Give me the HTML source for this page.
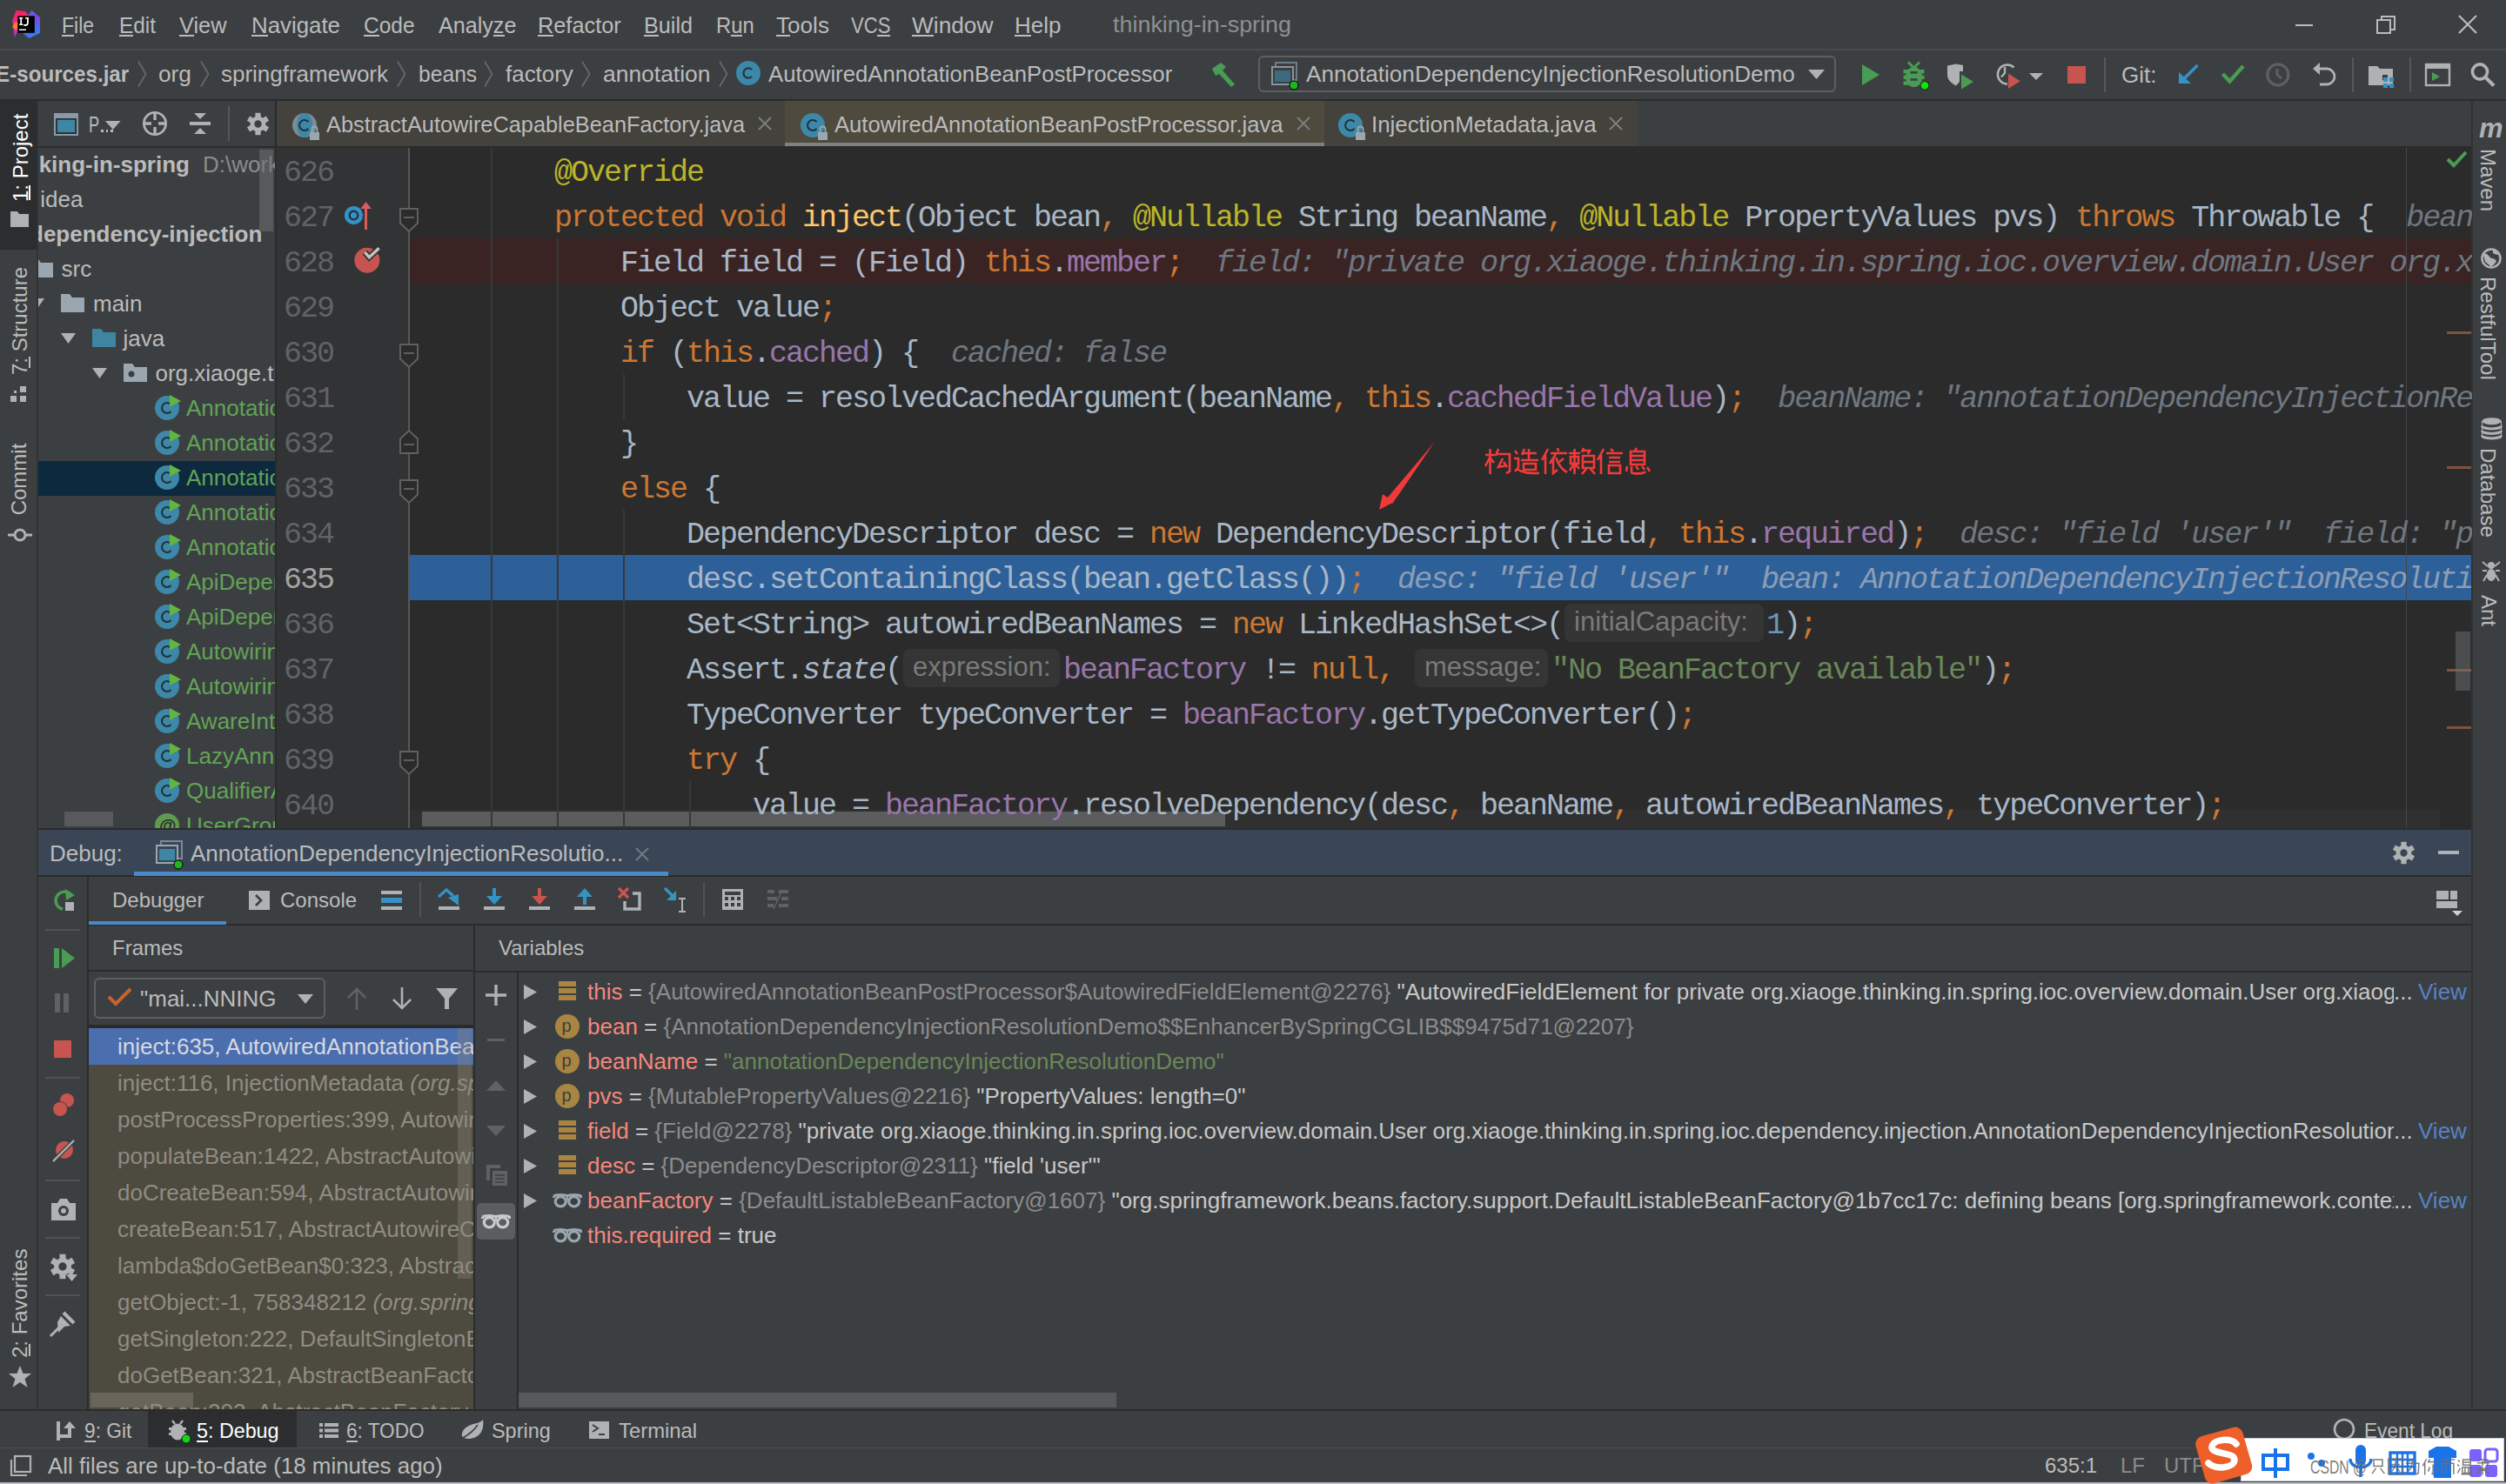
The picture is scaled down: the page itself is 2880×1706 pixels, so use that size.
<!DOCTYPE html>
<html><head><meta charset="utf-8"><title>IntelliJ</title>
<style>
html,body{margin:0;padding:0;width:2880px;height:1706px;overflow:hidden;background:#3C3F41}
body{position:relative;font-family:"Liberation Sans",sans-serif}
div{position:absolute;white-space:pre;box-sizing:border-box}
svg{position:absolute;overflow:visible}
</style></head><body>
<div style="left:0px;top:0px;width:2880px;height:1706px;background:#3C3F41;"></div>
<div style="left:0px;top:56px;width:2880px;height:2px;background:#4A4D4F;"></div>
<div style="left:0px;top:114px;width:2880px;height:2px;background:#2B2B2B;"></div>
<div style="left:0px;top:116px;width:42px;height:171px;background:#2B2D2F;"></div>
<div style="left:42px;top:116px;width:2px;height:1506px;background:#323232;"></div>
<div style="left:44px;top:168px;width:272px;height:2px;background:#2B2B2B;"></div>
<div style="left:316px;top:116px;width:2px;height:838px;background:#2B2B2B;"></div>
<div style="left:318px;top:116px;width:584px;height:52px;background:#43423C;"></div>
<div style="left:902px;top:116px;width:620px;height:52px;background:#4E4A3E;"></div>
<div style="left:902px;top:164px;width:620px;height:4px;background:#7B8185;"></div>
<div style="left:1522px;top:116px;width:360px;height:52px;background:#43423C;"></div>
<div style="left:318px;top:168px;width:2523px;height:2px;background:#2B2B2B;"></div>
<div style="left:318px;top:170px;width:153px;height:782px;background:#313335;"></div>
<div style="left:471px;top:170px;width:2370px;height:782px;background:#2B2B2B;"></div>
<div style="left:471px;top:274px;width:2370px;height:52px;background:#3A2323;"></div>
<div style="left:471px;top:638px;width:2370px;height:52px;background:#2D6099;"></div>
<div style="left:2840px;top:116px;width:2px;height:1506px;background:#323232;"></div>
<div style="left:44px;top:952px;width:2796px;height:2px;background:#2B2B2B;"></div>
<div style="left:44px;top:954px;width:2796px;height:52px;background:#3A4656;"></div>
<div style="left:44px;top:1006px;width:2796px;height:2px;background:#2B2B2B;"></div>
<div style="left:100px;top:1008px;width:2px;height:612px;background:#2B2B2B;"></div>
<div style="left:102px;top:1062px;width:2738px;height:2px;background:#2B2B2B;"></div>
<div style="left:544px;top:1064px;width:2px;height:556px;background:#2B2B2B;"></div>
<div style="left:102px;top:1115px;width:442px;height:2px;background:#2B2B2B;"></div>
<div style="left:546px;top:1116px;width:2294px;height:2px;background:#2B2B2B;"></div>
<div style="left:102px;top:1180px;width:442px;height:440px;background:#4D4A3F;"></div>
<div style="left:102px;top:1178px;width:442px;height:4px;background:#2B2B2B;"></div>
<div style="left:594px;top:1118px;width:2px;height:502px;background:#2B2B2B;"></div>
<div style="left:0px;top:1620px;width:2880px;height:2px;background:#2B2B2B;"></div>
<div style="left:170px;top:1622px;width:171px;height:42px;background:#2B2D2F;"></div>
<div style="left:0px;top:1664px;width:2880px;height:1px;background:#4A4A4C;"></div>
<div style="left:0px;top:1704px;width:2880px;height:2px;background:#B9BCC4;"></div>
<!--CONTENT-->
<svg style="position:absolute;left:0px;top:0px;" width="60" height="56" viewBox="0 0 60 56"><defs><linearGradient id="lgb" x1="0" y1="0" x2="0.3" y2="1"><stop offset="0" stop-color="#3B7BEA"/><stop offset="0.45" stop-color="#7B46E4"/><stop offset="1" stop-color="#2F7FF2"/></linearGradient><linearGradient id="lgp" x1="0" y1="0" x2="0" y2="1"><stop offset="0" stop-color="#FE2255"/><stop offset="1" stop-color="#B534D8"/></linearGradient></defs>
<polygon points="33,17 36.5,12 46,20 46,38 33.5,44 27,39 31,26" fill="url(#lgb)"/>
<polygon points="18.5,12 29,13 33,17.5 31,30 19,38 17,43 14,24.5" fill="url(#lgp)"/>
<polygon points="14,31 18,25 21,27 19,35" fill="#FC801D"/>
<rect x="20.3" y="18.3" width="19.5" height="19.5" fill="#000"/>
<rect x="22.2" y="20" width="4" height="1.6" fill="#fff"/><rect x="23.3" y="20" width="1.8" height="9" fill="#fff"/><rect x="22.2" y="27.4" width="4" height="1.6" fill="#fff"/>
<path d="M31.9 20 V26.5 C31.9 28.5 30.5 29 29 29 C28 29 27.5 28.6 27.2 28.2" fill="none" stroke="#fff" stroke-width="1.8"/><rect x="29" y="20" width="4" height="1.6" fill="#fff"/>
<rect x="22" y="33.5" width="8" height="1.5" fill="#fff"/></svg>
<div style="left:70.8px;top:3.00px;height:52px;line-height:52px;font-size:26px;color:#BBBBBB;font-family:'Liberation Sans',sans-serif;transform:scaleX(0.8833);transform-origin:0 0;">File</div>
<div style="left:71px;top:40px;width:14px;height:2px;background:#BBBBBB;"></div>
<div style="left:136.6px;top:3.00px;height:52px;line-height:52px;font-size:26px;color:#BBBBBB;font-family:'Liberation Sans',sans-serif;transform:scaleX(0.9363);transform-origin:0 0;">Edit</div>
<div style="left:137px;top:40px;width:16px;height:2px;background:#BBBBBB;"></div>
<div style="left:206.0px;top:3.00px;height:52px;line-height:52px;font-size:26px;color:#BBBBBB;font-family:'Liberation Sans',sans-serif;transform:scaleX(0.9750);transform-origin:0 0;">View</div>
<div style="left:206px;top:40px;width:17px;height:2px;background:#BBBBBB;"></div>
<div style="left:288.6px;top:3.00px;height:52px;line-height:52px;font-size:26px;color:#BBBBBB;font-family:'Liberation Sans',sans-serif;transform:scaleX(0.9932);transform-origin:0 0;">Navigate</div>
<div style="left:289px;top:40px;width:19px;height:2px;background:#BBBBBB;"></div>
<div style="left:418.4px;top:3.00px;height:52px;line-height:52px;font-size:26px;color:#BBBBBB;font-family:'Liberation Sans',sans-serif;transform:scaleX(0.9414);transform-origin:0 0;">Code</div>
<div style="left:418px;top:40px;width:18px;height:2px;background:#BBBBBB;"></div>
<div style="left:504.0px;top:3.00px;height:52px;line-height:52px;font-size:26px;color:#BBBBBB;font-family:'Liberation Sans',sans-serif;transform:scaleX(0.9665);transform-origin:0 0;">Analyze</div>
<div style="left:567px;top:40px;width:13px;height:2px;background:#BBBBBB;"></div>
<div style="left:618.3px;top:3.00px;height:52px;line-height:52px;font-size:26px;color:#BBBBBB;font-family:'Liberation Sans',sans-serif;transform:scaleX(0.9740);transform-origin:0 0;">Refactor</div>
<div style="left:618px;top:40px;width:18px;height:2px;background:#BBBBBB;"></div>
<div style="left:740.0px;top:3.00px;height:52px;line-height:52px;font-size:26px;color:#BBBBBB;font-family:'Liberation Sans',sans-serif;transform:scaleX(0.9697);transform-origin:0 0;">Build</div>
<div style="left:740px;top:40px;width:17px;height:2px;background:#BBBBBB;"></div>
<div style="left:823.0px;top:3.00px;height:52px;line-height:52px;font-size:26px;color:#BBBBBB;font-family:'Liberation Sans',sans-serif;transform:scaleX(0.9152);transform-origin:0 0;">Run</div>
<div style="left:840px;top:40px;width:13px;height:2px;background:#BBBBBB;"></div>
<div style="left:892.0px;top:3.00px;height:52px;line-height:52px;font-size:26px;color:#BBBBBB;font-family:'Liberation Sans',sans-serif;transform:scaleX(1.0041);transform-origin:0 0;">Tools</div>
<div style="left:892px;top:40px;width:16px;height:2px;background:#BBBBBB;"></div>
<div style="left:977.6px;top:3.00px;height:52px;line-height:52px;font-size:26px;color:#BBBBBB;font-family:'Liberation Sans',sans-serif;transform:scaleX(0.8486);transform-origin:0 0;">VCS</div>
<div style="left:1008px;top:40px;width:15px;height:2px;background:#BBBBBB;"></div>
<div style="left:1048.0px;top:3.00px;height:52px;line-height:52px;font-size:26px;color:#BBBBBB;font-family:'Liberation Sans',sans-serif;transform:scaleX(1.0102);transform-origin:0 0;">Window</div>
<div style="left:1048px;top:40px;width:25px;height:2px;background:#BBBBBB;"></div>
<div style="left:1166.0px;top:3.00px;height:52px;line-height:52px;font-size:26px;color:#BBBBBB;font-family:'Liberation Sans',sans-serif;transform:scaleX(1.0000);transform-origin:0 0;">Help</div>
<div style="left:1166px;top:40px;width:19px;height:2px;background:#BBBBBB;"></div>
<div style="left:1279.0px;top:2.00px;height:52px;line-height:52px;font-size:26px;color:#8E9092;font-family:'Liberation Sans',sans-serif;transform:scaleX(1.0354);transform-origin:0 0;">thinking-in-spring</div>
<div style="left:2638px;top:28px;width:20px;height:2px;background:#BBBBBB;"></div>
<svg style="position:absolute;left:2730px;top:16px;" width="26" height="26" viewBox="0 0 26 26"><rect x="2" y="7" width="15" height="15" fill="none" stroke="#BBBBBB" stroke-width="2"/><path d="M7 7 V3 H22 V18 H17" fill="none" stroke="#BBBBBB" stroke-width="2"/></svg>
<svg style="position:absolute;left:2824px;top:16px;" width="24" height="24" viewBox="0 0 24 24"><path d="M2 2 L22 22 M22 2 L2 22" stroke="#BBBBBB" stroke-width="2.2"/></svg>
<div style="left:182.4px;top:59.00px;height:52px;line-height:52px;font-size:26px;color:#BBBBBB;font-family:'Liberation Sans',sans-serif;transform:scaleX(1.0107);transform-origin:0 0;">org</div>
<div style="left:254.2px;top:59.00px;height:52px;line-height:52px;font-size:26px;color:#BBBBBB;font-family:'Liberation Sans',sans-serif;transform:scaleX(0.9990);transform-origin:0 0;">springframework</div>
<div style="left:480.7px;top:59.00px;height:52px;line-height:52px;font-size:26px;color:#BBBBBB;font-family:'Liberation Sans',sans-serif;transform:scaleX(0.9484);transform-origin:0 0;">beans</div>
<div style="left:580.7px;top:59.00px;height:52px;line-height:52px;font-size:26px;color:#BBBBBB;font-family:'Liberation Sans',sans-serif;transform:scaleX(0.9974);transform-origin:0 0;">factory</div>
<div style="left:692.5px;top:59.00px;height:52px;line-height:52px;font-size:26px;color:#BBBBBB;font-family:'Liberation Sans',sans-serif;transform:scaleX(1.0165);transform-origin:0 0;">annotation</div>
<div style="left:882.8px;top:59.00px;height:52px;line-height:52px;font-size:26px;color:#BBBBBB;font-family:'Liberation Sans',sans-serif;transform:scaleX(0.9882);transform-origin:0 0;">AutowiredAnnotationBeanPostProcessor</div>
<div style="left:-4.8174999999999955px;top:59.00px;height:52px;line-height:52px;font-size:26px;color:#BBBBBB;font-family:'Liberation Sans',sans-serif;font-weight:700;transform:scaleX(0.93);transform-origin:0 0">E-sources.jar</div>
<svg style="position:absolute;left:158px;top:70px;" width="11" height="31" viewBox="0 0 11 31"><path d="M1 0.5 L9.5 15 L1 29.5" fill="none" stroke="#65686A" stroke-width="1.8"/></svg>
<svg style="position:absolute;left:230px;top:70px;" width="11" height="31" viewBox="0 0 11 31"><path d="M1 0.5 L9.5 15 L1 29.5" fill="none" stroke="#65686A" stroke-width="1.8"/></svg>
<svg style="position:absolute;left:456px;top:70px;" width="11" height="31" viewBox="0 0 11 31"><path d="M1 0.5 L9.5 15 L1 29.5" fill="none" stroke="#65686A" stroke-width="1.8"/></svg>
<svg style="position:absolute;left:556px;top:70px;" width="11" height="31" viewBox="0 0 11 31"><path d="M1 0.5 L9.5 15 L1 29.5" fill="none" stroke="#65686A" stroke-width="1.8"/></svg>
<svg style="position:absolute;left:668px;top:70px;" width="11" height="31" viewBox="0 0 11 31"><path d="M1 0.5 L9.5 15 L1 29.5" fill="none" stroke="#65686A" stroke-width="1.8"/></svg>
<svg style="position:absolute;left:826px;top:70px;" width="11" height="31" viewBox="0 0 11 31"><path d="M1 0.5 L9.5 15 L1 29.5" fill="none" stroke="#65686A" stroke-width="1.8"/></svg>
<svg style="position:absolute;left:846px;top:70px;" width="28" height="28" viewBox="0 0 28 28"><circle cx="14" cy="14" r="14" fill="#3D87A8"/><path d="M18 10 A5.6 5.6 0 1 0 18 18" fill="none" stroke="#26343C" stroke-width="2.2"/></svg>
<svg style="position:absolute;left:1390px;top:70px;" width="34" height="32" viewBox="0 0 34 32"><path d="M3 9 L13 2 L19 7 L15 11 L29 27 L25 30 L11 15 L7 17 Z" fill="#499C54"/></svg>
<div style="left:1446px;top:64px;width:664px;height:42px;border:2px solid #5E6060;border-radius:6px;box-sizing:border-box"></div>
<svg style="position:absolute;left:1460px;top:70px;" width="36" height="34" viewBox="0 0 36 34"><rect x="6" y="2" width="24" height="20" fill="none" stroke="#6E7C86" stroke-width="2"/><rect x="2" y="7" width="24" height="20" fill="#3C3F41" stroke="#8A9499" stroke-width="2"/><rect x="5" y="11" width="18" height="13" fill="#3E6A7F"/><circle cx="27" cy="28" r="5" fill="#1DB71D" stroke="#000" stroke-width="1"/></svg>
<div style="left:1501.0px;top:59.00px;height:52px;line-height:52px;font-size:26px;color:#BBBBBB;font-family:'Liberation Sans',sans-serif;transform:scaleX(1.0045);transform-origin:0 0;">AnnotationDependencyInjectionResolutionDemo</div>
<svg style="position:absolute;left:2078px;top:80px;" width="20" height="12" viewBox="0 0 20 12"><path d="M0 0 H19 L9.5 11 Z" fill="#AFB1B3"/></svg>
<svg style="position:absolute;left:2138px;top:72px;" width="24" height="28" viewBox="0 0 24 28"><path d="M2 2 L22 14 L2 26 Z" fill="#499C54"/></svg>
<svg style="position:absolute;left:2186px;top:70px;" width="34" height="36" viewBox="0 0 34 36"><path d="M7 1.5 L13.5 8 L20 1.5" fill="none" stroke="#499C54" stroke-width="3"/><ellipse cx="13.5" cy="18.5" rx="9.5" ry="11.5" fill="#499C54"/><g fill="#499C54"><rect x="1.5" y="10" width="24" height="4.4"/><rect x="1.5" y="16.6" width="24" height="4.4"/><rect x="1.5" y="23.4" width="24" height="4.4"/></g><rect x="9.5" y="12" width="8" height="2.6" fill="#3C3F41"/><rect x="9.5" y="20.2" width="8" height="2.6" fill="#3C3F41"/><circle cx="26" cy="28.3" r="5" fill="#11E011" stroke="#1E2A1E" stroke-width="1.2"/></svg>
<svg style="position:absolute;left:2236px;top:72px;" width="36" height="34" viewBox="0 0 36 34"><path d="M2 3.5 L12 1.5 L20 3 V10 H16 V22 L12 26.5 C7 24 2 20 2 14 Z" fill="#AFB1B3"/><path d="M18 13.5 L32 22 L18 30.5 Z" fill="#499C54"/></svg>
<svg style="position:absolute;left:2290px;top:70px;" width="62" height="36" viewBox="0 0 62 36"><path d="M17 26.5 A11 11 0 1 1 24.5 7.5" fill="none" stroke="#AFB1B3" stroke-width="2.6"/><path d="M14 7 V14 L10 18.5" stroke="#AFB1B3" stroke-width="2.4" fill="none"/><path d="M18 14.5 L31.7 23.2 L18 32 Z" fill="#C75450"/><path d="M42 14 H58 L50 22 Z" fill="#AFB1B3"/></svg>
<div style="left:2376px;top:76px;width:21px;height:20px;background:#C75450;"></div>
<div style="left:2418px;top:66px;width:2px;height:40px;background:#555759;"></div>
<div style="left:2438px;top:60.00px;height:52px;line-height:52px;font-size:26px;color:#BBBBBB;font-family:'Liberation Sans',sans-serif;">Git:</div>
<svg style="position:absolute;left:2500px;top:70px;" width="30" height="32" viewBox="0 0 30 32"><path d="M25.5 5 L10 20.5" stroke="#3592C4" stroke-width="3.6"/><path d="M4 13 V26 H18 Z" fill="#3592C4"/></svg>
<svg style="position:absolute;left:2552px;top:72px;" width="32" height="28" viewBox="0 0 32 28"><path d="M2.5 13 L10.5 21.5 L26 4" fill="none" stroke="#499C54" stroke-width="4.4"/></svg>
<svg style="position:absolute;left:2602px;top:70px;" width="32" height="32" viewBox="0 0 32 32"><circle cx="15.9" cy="15.9" r="12" fill="none" stroke="#5E6060" stroke-width="3.2"/><path d="M15 9 V16 L20 20" stroke="#5E6060" stroke-width="3" fill="none"/></svg>
<svg style="position:absolute;left:2656px;top:70px;" width="32" height="32" viewBox="0 0 32 32"><path d="M9 9 H18 A9 9 0 1 1 18 27 H10" fill="none" stroke="#AFB1B3" stroke-width="2.8"/><path d="M2 9 L10 2 V16 Z" fill="#AFB1B3"/></svg>
<div style="left:2703px;top:66px;width:2px;height:40px;background:#555759;"></div>
<svg style="position:absolute;left:2720px;top:70px;" width="34" height="34" viewBox="0 0 34 34"><path d="M2 6 H12 L15 9 H30 V28 H2 Z" fill="#AFB1B3"/><rect x="18" y="16" width="6" height="6" fill="#3C3F41"/><rect x="19" y="19" width="5" height="5" fill="#3592C4"/><rect x="26" y="19" width="5" height="5" fill="#3592C4"/><rect x="26" y="26" width="5" height="5" fill="#3592C4"/><rect x="19" y="26" width="5" height="5" fill="#3592C4"/></svg>
<div style="left:2769px;top:66px;width:2px;height:40px;background:#555759;"></div>
<svg style="position:absolute;left:2786px;top:70px;" width="32" height="32" viewBox="0 0 32 32"><rect x="2" y="4" width="27" height="24" fill="none" stroke="#AFB1B3" stroke-width="2.4"/><rect x="2" y="4" width="27" height="5" fill="#AFB1B3"/><path d="M9 13 L18 18 L9 23 Z" fill="#499C54"/></svg>
<svg style="position:absolute;left:2838px;top:70px;" width="32" height="32" viewBox="0 0 32 32"><circle cx="12" cy="12.5" r="8.6" fill="none" stroke="#AFB1B3" stroke-width="3.6"/><path d="M18.5 19 L28 28.5" stroke="#AFB1B3" stroke-width="4"/></svg>
<div style="left:-25.0px;top:159.0px;width:98px;height:48px;line-height:48px;font-size:24px;color:#FFFFFF;font-family:'Liberation Sans',sans-serif;text-align:center;transform:rotate(-90deg)">1: Project</div>
<div style="left:33px;top:213px;width:2px;height:17px;background:#FFFFFF;"></div>
<svg style="position:absolute;left:11px;top:242px;" width="24" height="20" viewBox="0 0 24 20"><path d="M1 1 H9 L11 4 H22 V19 H1 Z" fill="#AFB1B3"/></svg>
<div style="left:-37.0px;top:347.0px;width:120px;height:48px;line-height:48px;font-size:24px;color:#BBBBBB;font-family:'Liberation Sans',sans-serif;text-align:center;transform:rotate(-90deg)">7: Structure</div>
<div style="left:33px;top:410px;width:2px;height:13px;background:#BBBBBB;"></div>
<svg style="position:absolute;left:10px;top:443px;" width="24" height="20" viewBox="0 0 24 20"><rect x="2" y="12" width="7" height="7" fill="#AFB1B3"/><rect x="13" y="12" width="7" height="7" fill="#AFB1B3"/><rect x="13" y="1" width="7" height="7" fill="#AFB1B3"/><rect x="6" y="6" width="3" height="3" fill="#AFB1B3"/></svg>
<div style="left:-20.0px;top:527.0px;width:84px;height:48px;line-height:48px;font-size:24px;color:#BBBBBB;font-family:'Liberation Sans',sans-serif;text-align:center;transform:rotate(-90deg)">Commit</div>
<svg style="position:absolute;left:9px;top:603px;" width="28" height="24" viewBox="0 0 28 24"><circle cx="14" cy="12" r="6" fill="none" stroke="#AFB1B3" stroke-width="3"/><path d="M0 12 H8 M20 12 H28" stroke="#AFB1B3" stroke-width="3"/></svg>
<div style="left:-36.0px;top:1478.0px;width:118px;height:48px;line-height:48px;font-size:24px;color:#BBBBBB;font-family:'Liberation Sans',sans-serif;text-align:center;transform:rotate(-90deg)">2: Favorites</div>
<div style="left:33px;top:1545px;width:2px;height:14px;background:#BBBBBB;"></div>
<svg style="position:absolute;left:9px;top:1569px;" width="28" height="28" viewBox="0 0 28 28"><path d="M14 1 L17.5 10 H27 L19.5 16 L22.5 26 L14 20 L5.5 26 L8.5 16 L1 10 H10.5 Z" fill="#AFB1B3"/></svg>
<div style="left:2849px;top:117.00px;height:62px;line-height:62px;font-size:31px;color:#AFB1B3;font-family:'Liberation Sans',sans-serif;font-weight:700;font-style:italic;letter-spacing:-1px">m</div>
<div style="left:2824.0px;top:182.0px;width:70px;height:48px;line-height:48px;font-size:24px;color:#BBBBBB;font-family:'Liberation Sans',sans-serif;text-align:center;transform:rotate(90deg)">Maven</div>
<svg style="position:absolute;left:2850px;top:284px;" width="26" height="26" viewBox="0 0 26 26"><circle cx="13" cy="13" r="10.5" fill="none" stroke="#AFB1B3" stroke-width="2.6"/><path d="M4 8 C8 6 10 10 12 12 C14 14 16 12 19 16 C17 20 14 22 12 23 C11 20 8 19 6 17 Z M15 3 C18 4 20 6 21 9 C19 9 17 8 15 7 Z" fill="#AFB1B3"/></svg>
<div style="left:2800.0px;top:353.0px;width:118px;height:48px;line-height:48px;font-size:24px;color:#BBBBBB;font-family:'Liberation Sans',sans-serif;text-align:center;transform:rotate(90deg)">RestfulTool</div>
<svg style="position:absolute;left:2852px;top:480px;" width="23" height="25" viewBox="0 0 23 25"><ellipse cx="11.5" cy="4.2" rx="11" ry="4" fill="#AFB1B3"/><path d="M0.5 9.5 C0.5 14 22.5 14 22.5 9.5 M0.5 15 C0.5 19.5 22.5 19.5 22.5 15 M0.5 20.5 C0.5 25 22.5 25 22.5 20.5" stroke="#AFB1B3" stroke-width="3" fill="none"/><path d="M0.5 4 V21 M22.5 4 V21" stroke="#AFB1B3" stroke-width="1"/></svg>
<div style="left:2812.0px;top:538.0px;width:94px;height:48px;line-height:48px;font-size:24px;color:#BBBBBB;font-family:'Liberation Sans',sans-serif;text-align:center;transform:rotate(90deg)">Database</div>
<svg style="position:absolute;left:2852px;top:645px;" width="22" height="24" viewBox="0 0 22 24"><circle cx="11" cy="5" r="4" fill="#AFB1B3"/><ellipse cx="11" cy="16" rx="5.2" ry="7" fill="#AFB1B3"/><path d="M1 1 L7 6 M21 1 L15 6 M1 11 H6 M21 11 H16 M2 23 L6 16 M20 23 L16 16" stroke="#AFB1B3" stroke-width="2"/></svg>
<div style="left:2840.5px;top:677.5px;width:37px;height:48px;line-height:48px;font-size:24px;color:#BBBBBB;font-family:'Liberation Sans',sans-serif;text-align:center;transform:rotate(90deg)">Ant</div>
<svg style="position:absolute;left:62px;top:130px;" width="28" height="26" viewBox="0 0 28 26"><rect x="0" y="0" width="28" height="26" fill="#8A99A6"/><rect x="2" y="6" width="24" height="18" fill="#2B2D2F"/><rect x="3.8" y="7.7" width="20.4" height="14.4" fill="#3E86A6"/></svg>
<div style="left:101.8px;top:118.00px;height:50px;line-height:50px;font-size:25px;color:#BBBBBB;font-family:'Liberation Sans',sans-serif;transform:scaleX(0.7284);transform-origin:0 0;">P</div>
<div style="left:116px;top:149px;width:2.5px;height:2.5px;background:#BBBBBB;"></div>
<div style="left:121.5px;top:149px;width:2.5px;height:2.5px;background:#BBBBBB;"></div>
<div style="left:127px;top:149px;width:2.5px;height:2.5px;background:#BBBBBB;"></div>
<svg style="position:absolute;left:121px;top:139px;" width="18" height="11" viewBox="0 0 18 11"><path d="M0 0 H17.6 L8.8 10 Z" fill="#AFB1B3"/></svg>
<svg style="position:absolute;left:163px;top:127px;" width="30" height="30" viewBox="0 0 30 30"><circle cx="15" cy="15" r="12.6" fill="none" stroke="#AFB1B3" stroke-width="2.8"/><path d="M15 3 V11 M15 19 V27 M3 15 H11 M19 15 H27" stroke="#AFB1B3" stroke-width="3.4"/></svg>
<svg style="position:absolute;left:217px;top:128px;" width="26" height="28" viewBox="0 0 26 28"><rect x="1" y="12" width="24" height="4" fill="#AFB1B3"/><path d="M6 2 H20 L13 9 Z M6 26 H20 L13 19 Z" fill="#AFB1B3"/></svg>
<div style="left:262px;top:122px;width:2px;height:40px;background:#555759;"></div>
<svg style="position:absolute;left:284px;top:130px;" width="25" height="25" viewBox="0 0 25 25"><g transform="scale(1.0416666666666667) translate(12,12)" fill="#AFB1B3"><circle r="8.6"/><rect x="-3" y="-12.2" width="6" height="6" transform="rotate(0)"/><rect x="-3" y="-12.2" width="6" height="6" transform="rotate(60)"/><rect x="-3" y="-12.2" width="6" height="6" transform="rotate(120)"/><rect x="-3" y="-12.2" width="6" height="6" transform="rotate(180)"/><rect x="-3" y="-12.2" width="6" height="6" transform="rotate(240)"/><rect x="-3" y="-12.2" width="6" height="6" transform="rotate(300)"/><circle r="4" fill="#3C3F41"/></g></svg>
<div style="left:44px;top:170px;width:272px;height:782px;overflow:hidden">
<div style="left:0;top:360px;width:272px;height:40px;background:#0D293E"></div>
<div style="left:-47px;top:-7.0px;height:52px;line-height:52px;font-size:26px;color:#BBBBBB;font-family:'Liberation Sans',sans-serif;font-weight:700">thinking-in-spring</div>
<div style="left:189px;top:-7.0px;height:52px;line-height:52px;font-size:26px;color:#8C8C8C;font-family:'Liberation Sans',sans-serif;font-weight:400">D:\work</div>
<div style="left:-5px;top:33.0px;height:52px;line-height:52px;font-size:26px;color:#BBBBBB;font-family:'Liberation Sans',sans-serif;font-weight:400">.idea</div>
<div style="left:-10px;top:73.0px;height:52px;line-height:52px;font-size:26px;color:#BBBBBB;font-family:'Liberation Sans',sans-serif;font-weight:700">dependency-injection</div>
<svg style="position:absolute;left:-11px;top:127px" width="29" height="23" viewBox="0 0 29 23"><path d="M1 1 H11 L14 5 H28 V22 H1 Z" fill="#9AA7B0"/></svg>
<div style="left:26.599999999999994px;top:113.0px;height:52px;line-height:52px;font-size:26px;color:#BBBBBB;font-family:'Liberation Sans',sans-serif;font-weight:400">src</div>
<svg style="position:absolute;left:-10px;top:173px" width="18" height="13" viewBox="0 0 18 13"><path d="M0 0 H17 L8.5 12 Z" fill="#AFB1B3"/></svg>
<svg style="position:absolute;left:25px;top:167px" width="29" height="23" viewBox="0 0 29 23"><path d="M1 1 H11 L14 5 H28 V22 H1 Z" fill="#9AA7B0"/></svg>
<div style="left:63px;top:153.0px;height:52px;line-height:52px;font-size:26px;color:#BBBBBB;font-family:'Liberation Sans',sans-serif;font-weight:400">main</div>
<svg style="position:absolute;left:26px;top:213px" width="18" height="13" viewBox="0 0 18 13"><path d="M0 0 H17 L8.5 12 Z" fill="#AFB1B3"/></svg>
<svg style="position:absolute;left:61px;top:207px" width="29" height="23" viewBox="0 0 29 23"><path d="M1 1 H11 L14 5 H28 V22 H1 Z" fill="#3E86A0"/></svg>
<div style="left:97.5px;top:193.0px;height:52px;line-height:52px;font-size:26px;color:#BBBBBB;font-family:'Liberation Sans',sans-serif;font-weight:400">java</div>
<svg style="position:absolute;left:62px;top:253px" width="18" height="13" viewBox="0 0 18 13"><path d="M0 0 H17 L8.5 12 Z" fill="#AFB1B3"/></svg>
<svg style="position:absolute;left:97px;top:247px" width="29" height="23" viewBox="0 0 29 23"><path d="M1 1 H11 L14 5 H28 V22 H1 Z" fill="#9AA7B0"/><circle cx="10" cy="13" r="3.5" fill="#3C3F41"/></svg>
<div style="left:134.5px;top:233.0px;height:52px;line-height:52px;font-size:26px;color:#BBBBBB;font-family:'Liberation Sans',sans-serif;font-weight:400">org.xiaoge.thinking</div>
<svg style="position:absolute;left:134px;top:285px" width="31" height="30" viewBox="0 0 31 30"><circle cx="14" cy="14" r="14" fill="#3D87A8"/><path d="M18.5 10 A6 6 0 1 0 18.5 18" fill="none" stroke="#22303A" stroke-width="2.1"/><path d="M17 -1 L30 6 L17 13 Z" fill="#62B543"/></svg>
<div style="left:170px;top:273.0px;height:52px;line-height:52px;font-size:26px;color:#62A356;font-family:'Liberation Sans',sans-serif;font-weight:400">AnnotationDependencyConstructorInjectionDemo</div>
<svg style="position:absolute;left:134px;top:325px" width="31" height="30" viewBox="0 0 31 30"><circle cx="14" cy="14" r="14" fill="#3D87A8"/><path d="M18.5 10 A6 6 0 1 0 18.5 18" fill="none" stroke="#22303A" stroke-width="2.1"/><path d="M17 -1 L30 6 L17 13 Z" fill="#62B543"/></svg>
<div style="left:170px;top:313.0px;height:52px;line-height:52px;font-size:26px;color:#62A356;font-family:'Liberation Sans',sans-serif;font-weight:400">AnnotationDependencyFieldInjectionDemo</div>
<svg style="position:absolute;left:134px;top:365px" width="31" height="30" viewBox="0 0 31 30"><circle cx="14" cy="14" r="14" fill="#3D87A8"/><path d="M18.5 10 A6 6 0 1 0 18.5 18" fill="none" stroke="#22303A" stroke-width="2.1"/><path d="M17 -1 L30 6 L17 13 Z" fill="#62B543"/></svg>
<div style="left:170px;top:353.0px;height:52px;line-height:52px;font-size:26px;color:#62A356;font-family:'Liberation Sans',sans-serif;font-weight:400">AnnotationDependencyInjectionResolutionDemo</div>
<svg style="position:absolute;left:134px;top:405px" width="31" height="30" viewBox="0 0 31 30"><circle cx="14" cy="14" r="14" fill="#3D87A8"/><path d="M18.5 10 A6 6 0 1 0 18.5 18" fill="none" stroke="#22303A" stroke-width="2.1"/><path d="M17 -1 L30 6 L17 13 Z" fill="#62B543"/></svg>
<div style="left:170px;top:393.0px;height:52px;line-height:52px;font-size:26px;color:#62A356;font-family:'Liberation Sans',sans-serif;font-weight:400">AnnotationDependencyMethodInjectionDemo</div>
<svg style="position:absolute;left:134px;top:445px" width="31" height="30" viewBox="0 0 31 30"><circle cx="14" cy="14" r="14" fill="#3D87A8"/><path d="M18.5 10 A6 6 0 1 0 18.5 18" fill="none" stroke="#22303A" stroke-width="2.1"/><path d="M17 -1 L30 6 L17 13 Z" fill="#62B543"/></svg>
<div style="left:170px;top:433.0px;height:52px;line-height:52px;font-size:26px;color:#62A356;font-family:'Liberation Sans',sans-serif;font-weight:400">AnnotationDependencySetterInjectionDemo</div>
<svg style="position:absolute;left:134px;top:485px" width="31" height="30" viewBox="0 0 31 30"><circle cx="14" cy="14" r="14" fill="#3D87A8"/><path d="M18.5 10 A6 6 0 1 0 18.5 18" fill="none" stroke="#22303A" stroke-width="2.1"/><path d="M17 -1 L30 6 L17 13 Z" fill="#62B543"/></svg>
<div style="left:170px;top:473.0px;height:52px;line-height:52px;font-size:26px;color:#62A356;font-family:'Liberation Sans',sans-serif;font-weight:400">ApiDependencyConstructorInjectionDemo</div>
<svg style="position:absolute;left:134px;top:525px" width="31" height="30" viewBox="0 0 31 30"><circle cx="14" cy="14" r="14" fill="#3D87A8"/><path d="M18.5 10 A6 6 0 1 0 18.5 18" fill="none" stroke="#22303A" stroke-width="2.1"/><path d="M17 -1 L30 6 L17 13 Z" fill="#62B543"/></svg>
<div style="left:170px;top:513.0px;height:52px;line-height:52px;font-size:26px;color:#62A356;font-family:'Liberation Sans',sans-serif;font-weight:400">ApiDependencySetterInjectionDemo</div>
<svg style="position:absolute;left:134px;top:565px" width="31" height="30" viewBox="0 0 31 30"><circle cx="14" cy="14" r="14" fill="#3D87A8"/><path d="M18.5 10 A6 6 0 1 0 18.5 18" fill="none" stroke="#22303A" stroke-width="2.1"/><path d="M17 -1 L30 6 L17 13 Z" fill="#62B543"/></svg>
<div style="left:170px;top:553.0px;height:52px;line-height:52px;font-size:26px;color:#62A356;font-family:'Liberation Sans',sans-serif;font-weight:400">AutowiringByNameDependencySetterInjectionDemo</div>
<svg style="position:absolute;left:134px;top:605px" width="31" height="30" viewBox="0 0 31 30"><circle cx="14" cy="14" r="14" fill="#3D87A8"/><path d="M18.5 10 A6 6 0 1 0 18.5 18" fill="none" stroke="#22303A" stroke-width="2.1"/><path d="M17 -1 L30 6 L17 13 Z" fill="#62B543"/></svg>
<div style="left:170px;top:593.0px;height:52px;line-height:52px;font-size:26px;color:#62A356;font-family:'Liberation Sans',sans-serif;font-weight:400">AutowiringConstructorDependencyConstructorInjectionDemo</div>
<svg style="position:absolute;left:134px;top:645px" width="31" height="30" viewBox="0 0 31 30"><circle cx="14" cy="14" r="14" fill="#3D87A8"/><path d="M18.5 10 A6 6 0 1 0 18.5 18" fill="none" stroke="#22303A" stroke-width="2.1"/><path d="M17 -1 L30 6 L17 13 Z" fill="#62B543"/></svg>
<div style="left:170px;top:633.0px;height:52px;line-height:52px;font-size:26px;color:#62A356;font-family:'Liberation Sans',sans-serif;font-weight:400">AwareInterfaceDependencyInjectionDemo</div>
<svg style="position:absolute;left:134px;top:685px" width="31" height="30" viewBox="0 0 31 30"><circle cx="14" cy="14" r="14" fill="#3D87A8"/><path d="M18.5 10 A6 6 0 1 0 18.5 18" fill="none" stroke="#22303A" stroke-width="2.1"/><path d="M17 -1 L30 6 L17 13 Z" fill="#62B543"/></svg>
<div style="left:170px;top:673.0px;height:52px;line-height:52px;font-size:26px;color:#62A356;font-family:'Liberation Sans',sans-serif;font-weight:400">LazyAnnotationDependencyInjectionDemo</div>
<svg style="position:absolute;left:134px;top:725px" width="31" height="30" viewBox="0 0 31 30"><circle cx="14" cy="14" r="14" fill="#3D87A8"/><path d="M18.5 10 A6 6 0 1 0 18.5 18" fill="none" stroke="#22303A" stroke-width="2.1"/><path d="M17 -1 L30 6 L17 13 Z" fill="#62B543"/></svg>
<div style="left:170px;top:713.0px;height:52px;line-height:52px;font-size:26px;color:#62A356;font-family:'Liberation Sans',sans-serif;font-weight:400">QualifierAnnotationDependencyInjectionDemo</div>
<svg style="position:absolute;left:134px;top:765px" width="30" height="30" viewBox="0 0 30 30"><circle cx="14" cy="14" r="14" fill="#5E9A4F"/><text x="5" y="21" font-family="Liberation Sans" font-weight="700" font-size="20" fill="#2B2B2B">@</text></svg>
<div style="left:170px;top:753.0px;height:52px;line-height:52px;font-size:26px;color:#62A356;font-family:'Liberation Sans',sans-serif;font-weight:400">UserGroup</div>
<div style="left:254px;top:2px;width:16px;height:94px;background:rgba(110,112,114,0.55)"></div>
<div style="left:30px;top:763px;width:56px;height:17px;background:rgba(110,112,114,0.55)"></div>
</div>
<svg style="position:absolute;left:336px;top:130px;" width="32" height="32" viewBox="0 0 32 32"><circle cx="14" cy="14" r="14" fill="#7E8B93"/><ellipse cx="14" cy="14" rx="9" ry="14" fill="#3D87A8"/><path d="M18.5 10 A6 6 0 1 0 18.5 18" fill="none" stroke="#22303A" stroke-width="2"/><rect x="20" y="22" width="11" height="9" fill="#9AA7B0"/><path d="M22.5 22 V18.5 A3 3 0 0 1 28.5 18.5 V22" fill="none" stroke="#9AA7B0" stroke-width="1.8"/></svg>
<div style="left:375.0px;top:117.00px;height:52px;line-height:52px;font-size:26px;color:#BBBBBB;font-family:'Liberation Sans',sans-serif;transform:scaleX(0.9742);transform-origin:0 0;">AbstractAutowireCapableBeanFactory.java</div>
<svg style="position:absolute;left:871px;top:134px;" width="16" height="16" viewBox="0 0 16 16"><path d="M1 1 L15 15 M15 1 L1 15" stroke="#7C7E80" stroke-width="2"/></svg>
<svg style="position:absolute;left:920px;top:130px;" width="32" height="32" viewBox="0 0 32 32"><circle cx="14" cy="14" r="14" fill="#3D87A8"/><path d="M18.5 10 A6 6 0 1 0 18.5 18" fill="none" stroke="#22303A" stroke-width="2"/><rect x="20" y="22" width="11" height="9" fill="#9AA7B0"/><path d="M22.5 22 V18.5 A3 3 0 0 1 28.5 18.5 V22" fill="none" stroke="#9AA7B0" stroke-width="1.8"/></svg>
<div style="left:959.0px;top:117.00px;height:52px;line-height:52px;font-size:26px;color:#BBBBBB;font-family:'Liberation Sans',sans-serif;transform:scaleX(0.9854);transform-origin:0 0;">AutowiredAnnotationBeanPostProcessor.java</div>
<svg style="position:absolute;left:1490px;top:134px;" width="16" height="16" viewBox="0 0 16 16"><path d="M1 1 L15 15 M15 1 L1 15" stroke="#7C7E80" stroke-width="2"/></svg>
<svg style="position:absolute;left:1538px;top:130px;" width="32" height="32" viewBox="0 0 32 32"><circle cx="14" cy="14" r="14" fill="#3D87A8"/><path d="M18.5 10 A6 6 0 1 0 18.5 18" fill="none" stroke="#22303A" stroke-width="2"/><rect x="20" y="22" width="11" height="9" fill="#9AA7B0"/><path d="M22.5 22 V18.5 A3 3 0 0 1 28.5 18.5 V22" fill="none" stroke="#9AA7B0" stroke-width="1.8"/></svg>
<div style="left:1576.0px;top:117.00px;height:52px;line-height:52px;font-size:26px;color:#BBBBBB;font-family:'Liberation Sans',sans-serif;transform:scaleX(0.9937);transform-origin:0 0;">InjectionMetadata.java</div>
<svg style="position:absolute;left:1849px;top:134px;" width="16" height="16" viewBox="0 0 16 16"><path d="M1 1 L15 15 M15 1 L1 15" stroke="#7C7E80" stroke-width="2"/></svg>
<div style="left:0;top:0;width:2880px;height:1706px;clip-path:inset(170px 39px 754px 318px)">
<div style="left:471px;top:931px;width:2333px;height:21px;background:rgba(255,255,255,0.028);"></div>
<div style="left:485px;top:933px;width:923px;height:17px;background:#5A5C5E;"></div>
<div style="left:564px;top:170px;width:2px;height:782px;background:#373839;"></div>
<div style="left:640px;top:274px;width:2px;height:678px;background:#373839;"></div>
<div style="left:716px;top:430px;width:2px;height:52px;background:#373839;"></div>
<div style="left:716px;top:586px;width:2px;height:366px;background:#373839;"></div>
<div style="left:792px;top:898px;width:2px;height:54px;background:#373839;"></div>
<div style="left:2765px;top:170px;width:1px;height:782px;background:#444648;"></div>
<div style="left:469px;top:170px;width:2px;height:782px;background:#555759;"></div>
<div style="left:326px;top:173.22px;height:52px;line-height:52px;font-size:35px;font-family:'Liberation Mono',monospace;letter-spacing:-2.0034px;"><span style="color:#606366;">626</span></div>
<div style="left:326px;top:225.22px;height:52px;line-height:52px;font-size:35px;font-family:'Liberation Mono',monospace;letter-spacing:-2.0034px;"><span style="color:#606366;">627</span></div>
<div style="left:326px;top:277.22px;height:52px;line-height:52px;font-size:35px;font-family:'Liberation Mono',monospace;letter-spacing:-2.0034px;"><span style="color:#606366;">628</span></div>
<div style="left:326px;top:329.22px;height:52px;line-height:52px;font-size:35px;font-family:'Liberation Mono',monospace;letter-spacing:-2.0034px;"><span style="color:#606366;">629</span></div>
<div style="left:326px;top:381.22px;height:52px;line-height:52px;font-size:35px;font-family:'Liberation Mono',monospace;letter-spacing:-2.0034px;"><span style="color:#606366;">630</span></div>
<div style="left:326px;top:433.22px;height:52px;line-height:52px;font-size:35px;font-family:'Liberation Mono',monospace;letter-spacing:-2.0034px;"><span style="color:#606366;">631</span></div>
<div style="left:326px;top:485.22px;height:52px;line-height:52px;font-size:35px;font-family:'Liberation Mono',monospace;letter-spacing:-2.0034px;"><span style="color:#606366;">632</span></div>
<div style="left:326px;top:537.22px;height:52px;line-height:52px;font-size:35px;font-family:'Liberation Mono',monospace;letter-spacing:-2.0034px;"><span style="color:#606366;">633</span></div>
<div style="left:326px;top:589.22px;height:52px;line-height:52px;font-size:35px;font-family:'Liberation Mono',monospace;letter-spacing:-2.0034px;"><span style="color:#606366;">634</span></div>
<div style="left:326px;top:641.22px;height:52px;line-height:52px;font-size:35px;font-family:'Liberation Mono',monospace;letter-spacing:-2.0034px;"><span style="color:#A4A3A3;">635</span></div>
<div style="left:326px;top:693.22px;height:52px;line-height:52px;font-size:35px;font-family:'Liberation Mono',monospace;letter-spacing:-2.0034px;"><span style="color:#606366;">636</span></div>
<div style="left:326px;top:745.22px;height:52px;line-height:52px;font-size:35px;font-family:'Liberation Mono',monospace;letter-spacing:-2.0034px;"><span style="color:#606366;">637</span></div>
<div style="left:326px;top:797.22px;height:52px;line-height:52px;font-size:35px;font-family:'Liberation Mono',monospace;letter-spacing:-2.0034px;"><span style="color:#606366;">638</span></div>
<div style="left:326px;top:849.22px;height:52px;line-height:52px;font-size:35px;font-family:'Liberation Mono',monospace;letter-spacing:-2.0034px;"><span style="color:#606366;">639</span></div>
<div style="left:326px;top:901.22px;height:52px;line-height:52px;font-size:35px;font-family:'Liberation Mono',monospace;letter-spacing:-2.0034px;"><span style="color:#606366;">640</span></div>
<div style="left:637px;top:173.22px;height:52px;line-height:52px;font-size:35px;font-family:'Liberation Mono',monospace;letter-spacing:-2.0034px;"><span style="color:#BBB529;">@Override</span></div>
<div style="left:637px;top:225.22px;height:52px;line-height:52px;font-size:35px;font-family:'Liberation Mono',monospace;letter-spacing:-2.0034px;"><span style="color:#CC7832;">protected void </span><span style="color:#FFC66D;">inject</span><span style="color:#A9B7C6;">(Object bean</span><span style="color:#CC7832;">,</span><span style="color:#A9B7C6;"> </span><span style="color:#BBB529;">@Nullable</span><span style="color:#A9B7C6;"> String beanName</span><span style="color:#CC7832;">,</span><span style="color:#A9B7C6;"> </span><span style="color:#BBB529;">@Nullable</span><span style="color:#A9B7C6;"> PropertyValues pvs) </span><span style="color:#CC7832;">throws</span><span style="color:#A9B7C6;"> Throwable {  </span><span style="color:#6F7780;font-style:italic;">bean</span></div>
<div style="left:713px;top:277.22px;height:52px;line-height:52px;font-size:35px;font-family:'Liberation Mono',monospace;letter-spacing:-2.0034px;"><span style="color:#A9B7C6;">Field field = (Field) </span><span style="color:#CC7832;">this</span><span style="color:#A9B7C6;">.</span><span style="color:#9876AA;">member</span><span style="color:#CC7832;">;</span><span style="color:#A9B7C6;">  </span><span style="color:#6F7780;font-style:italic;">field: &quot;private org.xiaoge.thinking.in.spring.ioc.overview.domain.User org.x</span></div>
<div style="left:713px;top:329.22px;height:52px;line-height:52px;font-size:35px;font-family:'Liberation Mono',monospace;letter-spacing:-2.0034px;"><span style="color:#A9B7C6;">Object value</span><span style="color:#CC7832;">;</span></div>
<div style="left:713px;top:381.22px;height:52px;line-height:52px;font-size:35px;font-family:'Liberation Mono',monospace;letter-spacing:-2.0034px;"><span style="color:#CC7832;">if</span><span style="color:#A9B7C6;"> (</span><span style="color:#CC7832;">this</span><span style="color:#A9B7C6;">.</span><span style="color:#9876AA;">cached</span><span style="color:#A9B7C6;">) {  </span><span style="color:#6F7780;font-style:italic;">cached: false</span></div>
<div style="left:789px;top:433.22px;height:52px;line-height:52px;font-size:35px;font-family:'Liberation Mono',monospace;letter-spacing:-2.0034px;"><span style="color:#A9B7C6;">value = resolvedCachedArgument(beanName</span><span style="color:#CC7832;">,</span><span style="color:#A9B7C6;"> </span><span style="color:#CC7832;">this</span><span style="color:#A9B7C6;">.</span><span style="color:#9876AA;">cachedFieldValue</span><span style="color:#A9B7C6;">)</span><span style="color:#CC7832;">;</span><span style="color:#A9B7C6;">  </span><span style="color:#6F7780;font-style:italic;">beanName: &quot;annotationDependencyInjectionRe</span></div>
<div style="left:713px;top:485.22px;height:52px;line-height:52px;font-size:35px;font-family:'Liberation Mono',monospace;letter-spacing:-2.0034px;"><span style="color:#A9B7C6;">}</span></div>
<div style="left:713px;top:537.22px;height:52px;line-height:52px;font-size:35px;font-family:'Liberation Mono',monospace;letter-spacing:-2.0034px;"><span style="color:#CC7832;">else</span><span style="color:#A9B7C6;"> {</span></div>
<div style="left:789px;top:589.22px;height:52px;line-height:52px;font-size:35px;font-family:'Liberation Mono',monospace;letter-spacing:-2.0034px;"><span style="color:#A9B7C6;">DependencyDescriptor desc = </span><span style="color:#CC7832;">new</span><span style="color:#A9B7C6;"> DependencyDescriptor(field</span><span style="color:#CC7832;">,</span><span style="color:#A9B7C6;"> </span><span style="color:#CC7832;">this</span><span style="color:#A9B7C6;">.</span><span style="color:#9876AA;">required</span><span style="color:#A9B7C6;">)</span><span style="color:#CC7832;">;</span><span style="color:#A9B7C6;">  </span><span style="color:#6F7780;font-style:italic;">desc: &quot;field &#x27;user&#x27;&quot;  field: &quot;p</span></div>
<div style="left:789px;top:641.22px;height:52px;line-height:52px;font-size:35px;font-family:'Liberation Mono',monospace;letter-spacing:-2.0034px;"><span style="color:#A9B7C6;">desc.setContainingClass(bean.getClass())</span><span style="color:#CC7832;">;</span><span style="color:#A9B7C6;">  </span><span style="color:#8C9DB5;font-style:italic;">desc: &quot;field &#x27;user&#x27;&quot;  bean: AnnotationDependencyInjectionResoluti</span></div>
<div style="left:789px;top:693.22px;height:52px;line-height:52px;font-size:35px;font-family:'Liberation Mono',monospace;letter-spacing:-2.0034px;"><span style="color:#A9B7C6;">Set&lt;String&gt; autowiredBeanNames = </span><span style="color:#CC7832;">new</span><span style="color:#A9B7C6;"> LinkedHashSet&lt;&gt;(</span></div>
<div style="left:789px;top:745.22px;height:52px;line-height:52px;font-size:35px;font-family:'Liberation Mono',monospace;letter-spacing:-2.0034px;"><span style="color:#A9B7C6;">Assert.</span><span style="color:#A9B7C6;font-style:italic;">state</span><span style="color:#A9B7C6;">(</span></div>
<div style="left:789px;top:797.22px;height:52px;line-height:52px;font-size:35px;font-family:'Liberation Mono',monospace;letter-spacing:-2.0034px;"><span style="color:#A9B7C6;">TypeConverter typeConverter = </span><span style="color:#9876AA;">beanFactory</span><span style="color:#A9B7C6;">.getTypeConverter()</span><span style="color:#CC7832;">;</span></div>
<div style="left:789px;top:849.22px;height:52px;line-height:52px;font-size:35px;font-family:'Liberation Mono',monospace;letter-spacing:-2.0034px;"><span style="color:#CC7832;">try</span><span style="color:#A9B7C6;"> {</span></div>
<div style="left:865px;top:901.22px;height:52px;line-height:52px;font-size:35px;font-family:'Liberation Mono',monospace;letter-spacing:-2.0034px;"><span style="color:#A9B7C6;">value = </span><span style="color:#9876AA;">beanFactory</span><span style="color:#A9B7C6;">.resolveDependency(desc</span><span style="color:#CC7832;">,</span><span style="color:#A9B7C6;"> beanName</span><span style="color:#CC7832;">,</span><span style="color:#A9B7C6;"> autowiredBeanNames</span><span style="color:#CC7832;">,</span><span style="color:#A9B7C6;"> typeConverter)</span><span style="color:#CC7832;">;</span></div>
<div style="left:1798px;top:694px;width:229px;height:44px;background:#353535;border-radius:8px"></div>
<div style="left:1809px;top:684.00px;height:62px;line-height:62px;font-size:31px;color:#7A7A7A;font-family:'Liberation Sans',sans-serif;">initialCapacity:</div>
<div style="left:2030px;top:693.22px;height:52px;line-height:52px;font-size:35px;font-family:'Liberation Mono',monospace;letter-spacing:-2.0034px;"><span style="color:#6897BB;">1</span><span style="color:#A9B7C6;">)</span><span style="color:#CC7832;">;</span></div>
<div style="left:1038px;top:746px;width:180px;height:44px;background:#353535;border-radius:8px"></div>
<div style="left:1049px;top:736.00px;height:62px;line-height:62px;font-size:31px;color:#7A7A7A;font-family:'Liberation Sans',sans-serif;">expression:</div>
<div style="left:1222px;top:745.22px;height:52px;line-height:52px;font-size:35px;font-family:'Liberation Mono',monospace;letter-spacing:-2.0034px;"><span style="color:#9876AA;">beanFactory</span><span style="color:#A9B7C6;"> != </span><span style="color:#CC7832;">null,</span><span style="color:#A9B7C6;"> </span></div>
<div style="left:1626px;top:746px;width:153px;height:44px;background:#353535;border-radius:8px"></div>
<div style="left:1637px;top:736.00px;height:62px;line-height:62px;font-size:31px;color:#7A7A7A;font-family:'Liberation Sans',sans-serif;">message:</div>
<div style="left:1783px;top:745.22px;height:52px;line-height:52px;font-size:35px;font-family:'Liberation Mono',monospace;letter-spacing:-2.0034px;"><span style="color:#6A8759;">&quot;No BeanFactory available&quot;</span><span style="color:#A9B7C6;">)</span><span style="color:#CC7832;">;</span></div>
</div>
<svg style="position:absolute;left:390px;top:228px;" width="44" height="40" viewBox="0 0 44 40"><circle cx="16.5" cy="19.6" r="10.6" fill="#3592C4"/><circle cx="16.5" cy="19.6" r="4.8" fill="none" stroke="#22343E" stroke-width="2.4"/><path d="M30.5 36 V11" stroke="#DB5C5C" stroke-width="3"/><path d="M24.3 12 L30.5 4 L37 12 Z" fill="#DB5C5C"/></svg>
<svg style="position:absolute;left:400px;top:276px;" width="44" height="44" viewBox="0 0 44 44"><circle cx="21.8" cy="23.3" r="14.5" fill="#C75450"/><path d="M19.3 14 L24.3 19.8 L35.6 9.2" fill="none" stroke="#313335" stroke-width="7" stroke-linejoin="miter"/><path d="M19.3 14 L24.3 19.8 L35.6 9.2" fill="none" stroke="#C4C4C4" stroke-width="3.4"/></svg>
<svg style="position:absolute;left:459px;top:239px;" width="23" height="29" viewBox="0 0 23 29"><path d="M1 1 H21 V17.5 L11 27 L1 17.5 Z" fill="#2B2B2B" stroke="#5F6163" stroke-width="1.9"/><path d="M5 11 H17" stroke="#5F6163" stroke-width="1.9"/></svg>
<svg style="position:absolute;left:459px;top:395px;" width="23" height="29" viewBox="0 0 23 29"><path d="M1 1 H21 V17.5 L11 27 L1 17.5 Z" fill="#2B2B2B" stroke="#5F6163" stroke-width="1.9"/><path d="M5 11 H17" stroke="#5F6163" stroke-width="1.9"/></svg>
<svg style="position:absolute;left:459px;top:493px;" width="23" height="29" viewBox="0 0 23 29"><path d="M1 28 H21 V11.5 L11 2 L1 11.5 Z" fill="#2B2B2B" stroke="#5F6163" stroke-width="1.9"/><path d="M5 18 H17" stroke="#5F6163" stroke-width="1.9"/></svg>
<svg style="position:absolute;left:459px;top:551px;" width="23" height="29" viewBox="0 0 23 29"><path d="M1 1 H21 V17.5 L11 27 L1 17.5 Z" fill="#2B2B2B" stroke="#5F6163" stroke-width="1.9"/><path d="M5 11 H17" stroke="#5F6163" stroke-width="1.9"/></svg>
<svg style="position:absolute;left:459px;top:863px;" width="23" height="29" viewBox="0 0 23 29"><path d="M1 1 H21 V17.5 L11 27 L1 17.5 Z" fill="#2B2B2B" stroke="#5F6163" stroke-width="1.9"/><path d="M5 11 H17" stroke="#5F6163" stroke-width="1.9"/></svg>
<svg style="position:absolute;left:2811px;top:172px;" width="26" height="22" viewBox="0 0 26 22"><path d="M2 11 L9 18 L23 3" fill="none" stroke="#499C54" stroke-width="4"/></svg>
<div style="left:2812px;top:381px;width:28px;height:3px;background:#7E5441;"></div>
<div style="left:2812px;top:536px;width:28px;height:3px;background:#7E5441;"></div>
<div style="left:2812px;top:769px;width:28px;height:3px;background:#7E5441;"></div>
<div style="left:2812px;top:835px;width:28px;height:3px;background:#7E5441;"></div>
<div style="left:2822px;top:726px;width:17px;height:68px;background:rgba(110,112,114,0.5);"></div>
<svg style="position:absolute;left:1575px;top:500px;" width="80" height="95" viewBox="0 0 80 95"><path d="M73 9 L27 70 L30 72 Z" fill="#F03A3A"/><path d="M10 86 L14 68 L27 77 Z" fill="#F03A3A"/><path d="M73 9 L18 74 L25 79 Z" fill="#F03A3A"/></svg>
<svg style="position:absolute;left:1706px;top:514px;" width="32" height="32" viewBox="0 0 32 32"><g transform="scale(1.0)"><path d="M1 9 H12 M6.5 2 V31 M6 12 L1 22 M7 13 L11 18 M16 2 L13 10 M15 8 H29 V28 L25 30 M21 13 L16 23 L26 21 M22 17 L26 23" fill="none" stroke="#F23A3A" stroke-width="2.6" stroke-linecap="butt"/></g></svg>
<svg style="position:absolute;left:1738px;top:514px;" width="32" height="32" viewBox="0 0 32 32"><g transform="scale(1.0)"><path d="M3 4 L6 8 M2 13 H7 V23 L3 28 M5 25 C12 30 20 30 31 30 M14 2 L11 9 M12 7 H28 M19 2 V15 M10 15 H30 M13 19 H27 V26 H13 Z" fill="none" stroke="#F23A3A" stroke-width="2.6" stroke-linecap="butt"/></g></svg>
<svg style="position:absolute;left:1770px;top:514px;" width="32" height="32" viewBox="0 0 32 32"><g transform="scale(1.0)"><path d="M9 2 L2 15 M6 9 V31 M20 1 L21 5 M12 7 H31 M18 8 L11 19 M15 13 V30 L20 26 M18 12 C21 20 25 26 31 29 M27 13 L22 17" fill="none" stroke="#F23A3A" stroke-width="2.6" stroke-linecap="butt"/></g></svg>
<svg style="position:absolute;left:1802px;top:514px;" width="32" height="32" viewBox="0 0 32 32"><g transform="scale(1.0)"><path d="M1 7 H14 M7.5 2 V31 M3 11 H12 V19 H3 Z M7 19 L2 27 M8 19 L13 25 M18 1 L16 6 M17 4 H25 L23 8 M17 10 H30 V24 H17 Z M17 17 H30 M21 25 L16 31 M26 25 L31 31" fill="none" stroke="#F23A3A" stroke-width="2.6" stroke-linecap="butt"/></g></svg>
<svg style="position:absolute;left:1834px;top:514px;" width="32" height="32" viewBox="0 0 32 32"><g transform="scale(1.0)"><path d="M9 2 L2 15 M6 9 V31 M17 2 L20 5 M12 7 H31 M15 12 H28 M15 17 H28 M15 21 H28 V30 H15 Z" fill="none" stroke="#F23A3A" stroke-width="2.6" stroke-linecap="butt"/></g></svg>
<svg style="position:absolute;left:1866px;top:514px;" width="32" height="32" viewBox="0 0 32 32"><g transform="scale(1.0)"><path d="M15 1 L13 4 M8 5 H24 V20 H8 Z M8 10 H24 M8 15 H24 M4 22 L3 28 M9 22 V29 C9 31 24 31 25 28 M14 22 L17 26 M21 22 L24 26 M27 23 L30 28" fill="none" stroke="#F23A3A" stroke-width="2.6" stroke-linecap="butt"/></g></svg>
<div style="left:57px;top:955.00px;height:52px;line-height:52px;font-size:26px;color:#BBBBBB;font-family:'Liberation Sans',sans-serif;">Debug:</div>
<svg style="position:absolute;left:178px;top:966px;" width="34" height="34" viewBox="0 0 34 34"><rect x="7" y="1" width="24" height="20" fill="none" stroke="#7B8A96" stroke-width="2"/><rect x="2" y="6" width="24" height="20" fill="#3A4656" stroke="#9AA7B0" stroke-width="2"/><rect x="5" y="10" width="18" height="13" fill="#3E86A6"/><circle cx="27" cy="28" r="5" fill="#1DB71D" stroke="#000" stroke-width="1"/></svg>
<div style="left:219px;top:955.00px;height:52px;line-height:52px;font-size:26px;color:#BBBBBB;font-family:'Liberation Sans',sans-serif;">AnnotationDependencyInjectionResolutio...</div>
<svg style="position:absolute;left:730px;top:974px;" width="16" height="16" viewBox="0 0 16 16"><path d="M1 1 L15 15 M15 1 L1 15" stroke="#6E7C86" stroke-width="2"/></svg>
<div style="left:154px;top:1002px;width:614px;height:5px;background:#4A88C7;"></div>
<svg style="position:absolute;left:2750px;top:968px;" width="25" height="25" viewBox="0 0 25 25"><g transform="scale(1.0416666666666667) translate(12,12)" fill="#AFB1B3"><circle r="8.6"/><rect x="-3" y="-12.2" width="6" height="6" transform="rotate(0)"/><rect x="-3" y="-12.2" width="6" height="6" transform="rotate(60)"/><rect x="-3" y="-12.2" width="6" height="6" transform="rotate(120)"/><rect x="-3" y="-12.2" width="6" height="6" transform="rotate(180)"/><rect x="-3" y="-12.2" width="6" height="6" transform="rotate(240)"/><rect x="-3" y="-12.2" width="6" height="6" transform="rotate(300)"/><circle r="4" fill="#3A4656"/></g></svg>
<div style="left:2802px;top:978px;width:24px;height:4px;background:#AFB1B3;"></div>
<div style="left:129px;top:1011.00px;height:48px;line-height:48px;font-size:24px;color:#BBBBBB;font-family:'Liberation Sans',sans-serif;">Debugger</div>
<div style="left:102px;top:1059px;width:158px;height:4px;background:#4A88C7;"></div>
<svg style="position:absolute;left:285px;top:1023px;" width="26" height="24" viewBox="0 0 26 24"><rect x="1" y="1" width="24" height="22" fill="#AFB1B3"/><path d="M9 6 L15 12 L9 18" fill="none" stroke="#3C3F41" stroke-width="2.6"/></svg>
<div style="left:322px;top:1011.00px;height:48px;line-height:48px;font-size:24px;color:#BBBBBB;font-family:'Liberation Sans',sans-serif;">Console</div>
<svg style="position:absolute;left:436px;top:1022px;" width="28" height="28" viewBox="0 0 28 28"><rect x="2" y="2" width="24" height="4" fill="#AFB1B3"/><rect x="2" y="10" width="24" height="6" fill="#3592C4"/><rect x="2" y="20" width="24" height="4" fill="#AFB1B3"/></svg>
<div style="left:482px;top:1014px;width:2px;height:40px;background:#505254;"></div>
<svg style="position:absolute;left:502px;top:1020px;" width="28" height="28" viewBox="0 0 28 28"><path d="M2 11 L11 3 L19 10" fill="none" stroke="#3592C4" stroke-width="3.2"/><path d="M13 12 L25 8 V21 Z" fill="#3592C4"/><rect x="2" y="22" width="24" height="4" fill="#AFB1B3"/></svg>
<svg style="position:absolute;left:554px;top:1020px;" width="28" height="28" viewBox="0 0 28 28"><rect x="12" y="1" width="4" height="11" fill="#3592C4"/><path d="M5 10 H23 L14 20 Z" fill="#3592C4"/><rect x="2" y="22" width="24" height="4" fill="#AFB1B3"/></svg>
<svg style="position:absolute;left:606px;top:1020px;" width="28" height="28" viewBox="0 0 28 28"><rect x="12" y="1" width="4" height="11" fill="#C75450"/><path d="M5 10 H23 L14 20 Z" fill="#C75450"/><rect x="2" y="22" width="24" height="4" fill="#AFB1B3"/></svg>
<svg style="position:absolute;left:658px;top:1020px;" width="28" height="28" viewBox="0 0 28 28"><rect x="12" y="10" width="4" height="10" fill="#3592C4"/><path d="M5 11 H23 L14 1 Z" fill="#3592C4"/><rect x="2" y="22" width="24" height="4" fill="#AFB1B3"/></svg>
<svg style="position:absolute;left:709px;top:1019px;" width="30" height="30" viewBox="0 0 30 30"><path d="M2 2 L13 13 M13 2 L2 13" stroke="#C75450" stroke-width="3.4"/><path d="M18 8 H26 V26 H9 V17" fill="none" stroke="#AFB1B3" stroke-width="3.4"/></svg>
<svg style="position:absolute;left:762px;top:1019px;" width="30" height="30" viewBox="0 0 30 30"><path d="M2 2 L11 11" stroke="#3592C4" stroke-width="3.4"/><path d="M15 5 V16 H4 Z" fill="#3592C4"/><path d="M18 14 H26 M22 14 V29 M18 29 H26" stroke="#AFB1B3" stroke-width="2"/></svg>
<div style="left:808px;top:1014px;width:2px;height:40px;background:#505254;"></div>
<svg style="position:absolute;left:829px;top:1021px;" width="26" height="26" viewBox="0 0 26 26"><rect x="1" y="1" width="24" height="24" fill="#AFB1B3"/><rect x="4" y="4" width="18" height="4" fill="#3C3F41"/><g fill="#3C3F41"><rect x="4" y="10" width="4" height="4"/><rect x="11" y="10" width="4" height="4"/><rect x="18" y="10" width="4" height="4"/><rect x="4" y="17" width="4" height="4"/><rect x="11" y="17" width="4" height="4"/><rect x="18" y="17" width="4" height="4"/></g></svg>
<svg style="position:absolute;left:881px;top:1021px;" width="26" height="26" viewBox="0 0 26 26"><g fill="#5E6264"><rect x="1" y="2" width="8" height="4"/><rect x="14" y="2" width="11" height="4"/><rect x="1" y="10" width="11" height="4"/><rect x="17" y="10" width="8" height="4"/><rect x="1" y="18" width="7" height="4"/><rect x="14" y="18" width="11" height="4"/></g><path d="M8 24 L18 2" stroke="#5E6264" stroke-width="1.6"/></svg>
<svg style="position:absolute;left:2798px;top:1022px;" width="34" height="32" viewBox="0 0 34 32"><rect x="2" y="2" width="14" height="10" fill="#AFB1B3"/><rect x="18" y="2" width="8" height="10" fill="#AFB1B3"/><rect x="2" y="14" width="24" height="8" fill="#AFB1B3"/><path d="M20 25 H32 L26 31 Z" fill="#D0D0D0"/></svg>
<svg style="position:absolute;left:58px;top:1020px;" width="32" height="32" viewBox="0 0 32 32"><path d="M23 8 A10 10 0 1 0 14 25" fill="none" stroke="#499C54" stroke-width="3.4"/><path d="M17 2 L28 9 L18 15 Z" fill="#499C54"/><rect x="17" y="17" width="10" height="10" fill="#AFB1B3"/></svg>
<div style="left:52px;top:1068px;width:40px;height:2px;background:#505254;"></div>
<svg style="position:absolute;left:60px;top:1089px;" width="28" height="26" viewBox="0 0 28 26"><rect x="2" y="1" width="6" height="23" fill="#499C54"/><path d="M11 1 L26 12.5 L11 24 Z" fill="#499C54"/></svg>
<svg style="position:absolute;left:62px;top:1141px;" width="20" height="24" viewBox="0 0 20 24"><rect x="1" y="1" width="6" height="22" fill="#5E6264"/><rect x="11" y="1" width="6" height="22" fill="#5E6264"/></svg>
<div style="left:62px;top:1196px;width:20px;height:20px;background:#C75450;"></div>
<div style="left:52px;top:1238px;width:40px;height:2px;background:#505254;"></div>
<svg style="position:absolute;left:58px;top:1256px;" width="30" height="30" viewBox="0 0 30 30"><circle cx="19" cy="9" r="8" fill="#C75450"/><circle cx="11" cy="19" r="9" fill="#3C3F41"/><circle cx="11" cy="19" r="8" fill="#C75450"/></svg>
<svg style="position:absolute;left:58px;top:1308px;" width="30" height="30" viewBox="0 0 30 30"><circle cx="16" cy="14" r="10" fill="#C75450"/><path d="M3 27 L27 3" stroke="#3C3F41" stroke-width="5"/><path d="M3 27 L27 3" stroke="#AFB1B3" stroke-width="2.4"/></svg>
<div style="left:52px;top:1356px;width:40px;height:2px;background:#505254;"></div>
<svg style="position:absolute;left:57px;top:1375px;" width="32" height="30" viewBox="0 0 32 30"><path d="M2 8 H9 L12 3 H20 L23 8 H30 V28 H2 Z" fill="#AFB1B3"/><circle cx="16" cy="17" r="6" fill="#3C3F41"/><circle cx="16" cy="17" r="3" fill="#AFB1B3"/></svg>
<div style="left:52px;top:1422px;width:40px;height:2px;background:#505254;"></div>
<svg style="position:absolute;left:58px;top:1442px;" width="28" height="28" viewBox="0 0 28 28"><g transform="scale(1.1666666666666667) translate(12,12)" fill="#AFB1B3"><circle r="8.6"/><rect x="-3" y="-12.2" width="6" height="6" transform="rotate(0)"/><rect x="-3" y="-12.2" width="6" height="6" transform="rotate(60)"/><rect x="-3" y="-12.2" width="6" height="6" transform="rotate(120)"/><rect x="-3" y="-12.2" width="6" height="6" transform="rotate(180)"/><rect x="-3" y="-12.2" width="6" height="6" transform="rotate(240)"/><rect x="-3" y="-12.2" width="6" height="6" transform="rotate(300)"/><circle r="4" fill="#3C3F41"/></g></svg>
<svg style="position:absolute;left:76px;top:1465px;" width="14" height="9" viewBox="0 0 14 9"><path d="M0 0 H13 L6.5 8 Z" fill="#AFB1B3"/></svg>
<div style="left:52px;top:1488px;width:40px;height:2px;background:#505254;"></div>
<svg style="position:absolute;left:56px;top:1506px;" width="32" height="32" viewBox="0 0 32 32"><path d="M14 7 L25 18 L18 19 L11 26 L10 14 Z" fill="#AFB1B3"/><path d="M2 30 L13 19" stroke="#AFB1B3" stroke-width="3"/><path d="M17 3 L29 15" stroke="#AFB1B3" stroke-width="4"/></svg>
<div style="left:129px;top:1066.00px;height:48px;line-height:48px;font-size:24px;color:#BBBBBB;font-family:'Liberation Sans',sans-serif;">Frames</div>
<div style="left:108px;top:1124px;width:266px;height:47px;border:2px solid #5E6060;border-radius:6px;box-sizing:border-box"></div>
<svg style="position:absolute;left:123px;top:1134px;" width="30" height="24" viewBox="0 0 30 24"><path d="M2 12 L10 20 L27 3" fill="none" stroke="#C9632B" stroke-width="4"/></svg>
<div style="left:161px;top:1122.00px;height:52px;line-height:52px;font-size:26px;color:#BBBBBB;font-family:'Liberation Sans',sans-serif;">&quot;mai...NNING</div>
<svg style="position:absolute;left:342px;top:1143px;" width="19" height="12" viewBox="0 0 19 12"><path d="M0 0 H18 L9 11 Z" fill="#AFB1B3"/></svg>
<svg style="position:absolute;left:398px;top:1134px;" width="24" height="28" viewBox="0 0 24 28"><path d="M12 3 V27" stroke="#5E6264" stroke-width="2.6"/><path d="M2 13 L12 3 L22 13" fill="none" stroke="#5E6264" stroke-width="2.6"/></svg>
<svg style="position:absolute;left:450px;top:1134px;" width="24" height="28" viewBox="0 0 24 28"><path d="M12 1 V25" stroke="#AFB1B3" stroke-width="2.6"/><path d="M2 15 L12 25 L22 15" fill="none" stroke="#AFB1B3" stroke-width="2.6"/></svg>
<svg style="position:absolute;left:500px;top:1135px;" width="28" height="26" viewBox="0 0 28 26"><path d="M1 1 H26 L16 13 V25 H11 V13 Z" fill="#AFB1B3"/></svg>
<div style="left:102px;top:1180px;width:442px;height:440px;overflow:hidden">
<div style="left:0;top:2px;width:442px;height:42px;background:#4B6EAF"></div>
<div style="left:33px;top:-3px;height:52px;line-height:52px;font-size:26px;font-family:'Liberation Sans',sans-serif;color:#D6D9DF;white-space:pre">inject:635, AutowiredAnnotationBeanPostProcessor$AutowiredFieldElement<i> (org.springframework.beans.factory.annotation)</i></div>
<div style="left:33px;top:39px;height:52px;line-height:52px;font-size:26px;font-family:'Liberation Sans',sans-serif;color:#8F8C83;white-space:pre">inject:116, InjectionMetadata<i> (org.springframework.beans.factory.annotation)</i></div>
<div style="left:33px;top:81px;height:52px;line-height:52px;font-size:26px;font-family:'Liberation Sans',sans-serif;color:#8F8C83;white-space:pre">postProcessProperties:399, AutowiredAnnotationBeanPostProcessor<i></i></div>
<div style="left:33px;top:123px;height:52px;line-height:52px;font-size:26px;font-family:'Liberation Sans',sans-serif;color:#8F8C83;white-space:pre">populateBean:1422, AbstractAutowireCapableBeanFactory<i></i></div>
<div style="left:33px;top:165px;height:52px;line-height:52px;font-size:26px;font-family:'Liberation Sans',sans-serif;color:#8F8C83;white-space:pre">doCreateBean:594, AbstractAutowireCapableBeanFactory<i></i></div>
<div style="left:33px;top:207px;height:52px;line-height:52px;font-size:26px;font-family:'Liberation Sans',sans-serif;color:#8F8C83;white-space:pre">createBean:517, AbstractAutowireCapableBeanFactory<i></i></div>
<div style="left:33px;top:249px;height:52px;line-height:52px;font-size:26px;font-family:'Liberation Sans',sans-serif;color:#8F8C83;white-space:pre">lambda$doGetBean$0:323, AbstractBeanFactory<i></i></div>
<div style="left:33px;top:291px;height:52px;line-height:52px;font-size:26px;font-family:'Liberation Sans',sans-serif;color:#8F8C83;white-space:pre">getObject:-1, 758348212<i> (org.springframework.beans.factory.support)</i></div>
<div style="left:33px;top:333px;height:52px;line-height:52px;font-size:26px;font-family:'Liberation Sans',sans-serif;color:#8F8C83;white-space:pre">getSingleton:222, DefaultSingletonBeanRegistry<i></i></div>
<div style="left:33px;top:375px;height:52px;line-height:52px;font-size:26px;font-family:'Liberation Sans',sans-serif;color:#8F8C83;white-space:pre">doGetBean:321, AbstractBeanFactory<i></i></div>
<div style="left:33px;top:417px;height:52px;line-height:52px;font-size:26px;font-family:'Liberation Sans',sans-serif;color:#8F8C83;white-space:pre">getBean:202, AbstractBeanFactory<i> (org.springframework.beans.factory.support)</i></div>
<div style="left:424px;top:2px;width:16px;height:288px;background:rgba(140,136,125,0.35)"></div>
<div style="left:2px;top:421px;width:118px;height:17px;background:rgba(140,136,125,0.45)"></div>
</div>
<div style="left:573px;top:1066.00px;height:48px;line-height:48px;font-size:24px;color:#BBBBBB;font-family:'Liberation Sans',sans-serif;">Variables</div>
<svg style="position:absolute;left:556px;top:1130px;" width="28" height="28" viewBox="0 0 28 28"><path d="M14 2 V26 M2 14 H26" stroke="#AFB1B3" stroke-width="3.4"/></svg>
<div style="left:560px;top:1194px;width:20px;height:3px;background:#5E6264;"></div>
<svg style="position:absolute;left:558px;top:1240px;" width="24" height="16" viewBox="0 0 24 16"><path d="M1 14 L12 2 L23 14 Z" fill="#5E6264"/></svg>
<svg style="position:absolute;left:558px;top:1292px;" width="24" height="16" viewBox="0 0 24 16"><path d="M1 2 L12 14 L23 2 Z" fill="#5E6264"/></svg>
<svg style="position:absolute;left:557px;top:1337px;" width="28" height="28" viewBox="0 0 28 28"><path d="M2 2 H18 V6 H6 V20 H2 Z" fill="#5E6264"/><rect x="9" y="9" width="17" height="17" fill="#5E6264"/><path d="M12 14 H23 M12 18 H23 M12 22 H23" stroke="#3C3F41" stroke-width="1.6"/></svg>
<div style="left:548px;top:1383px;width:44px;height:42px;background:#5A5E61;border-radius:5px"></div>
<svg style="position:absolute;left:554px;top:1396px;" width="32" height="18" viewBox="0 0 32 18"><path d="M0.5 3 C3 1 13 1 16 3 C19 1 29 1 31.5 3 V5" fill="none" stroke="#C9CBCD" stroke-width="3"/><path d="M0.5 3 V5" stroke="#C9CBCD" stroke-width="3"/><ellipse cx="8.3" cy="9.3" rx="6" ry="5.6" fill="none" stroke="#C9CBCD" stroke-width="3.2"/><ellipse cx="23.7" cy="9.3" rx="6" ry="5.6" fill="none" stroke="#C9CBCD" stroke-width="3.2"/><path d="M16 2.5 V7.5" stroke="#C9CBCD" stroke-width="2"/></svg>
<svg style="position:absolute;left:601px;top:1131px;" width="18" height="19" viewBox="0 0 18 19"><path d="M1 1 L16 9.5 L1 18 Z" fill="#AFB1B3"/></svg>
<svg style="position:absolute;left:642px;top:1128px;" width="21" height="24" viewBox="0 0 21 24"><g fill="#AA8542"><rect x="0" y="0" width="20" height="6"/><rect x="0" y="8" width="20" height="6"/><rect x="0" y="16" width="20" height="6"/></g></svg>
<div style="left:675px;top:1114px;width:2076px;height:52px;line-height:52px;font-size:26px;font-family:'Liberation Sans',sans-serif;white-space:pre;overflow:hidden"><span style="color:#F5877C">this</span><span style="color:#C8C8C8"> = </span><span style="color:#8C8C8C">{AutowiredAnnotationBeanPostProcessor$AutowiredFieldElement@2276}</span><span style="color:#C8C8C8"> &quot;AutowiredFieldElement for private org.xiaoge.thinking.in.spring.ioc.overview.domain.User org.xiaoge.thinking.in.spring.ioc</span></div>
<div style="left:2751px;top:1114.00px;height:52px;line-height:52px;font-size:26px;color:#C8C8C8;font-family:'Liberation Sans',sans-serif;">...</div>
<div style="left:2779px;top:1114.00px;height:52px;line-height:52px;font-size:26px;color:#5882C2;font-family:'Liberation Sans',sans-serif;">View</div>
<svg style="position:absolute;left:601px;top:1171px;" width="18" height="19" viewBox="0 0 18 19"><path d="M1 1 L16 9.5 L1 18 Z" fill="#AFB1B3"/></svg>
<svg style="position:absolute;left:637px;top:1165px;" width="30" height="30" viewBox="0 0 30 30"><circle cx="15" cy="15" r="14" fill="#A98542"/><text x="8.5" y="21" font-family="Liberation Sans" font-size="20" fill="#3C3F41">p</text></svg>
<div style="left:675px;top:1154px;width:2100px;height:52px;line-height:52px;font-size:26px;font-family:'Liberation Sans',sans-serif;white-space:pre;overflow:hidden"><span style="color:#F5877C">bean</span><span style="color:#C8C8C8"> = </span><span style="color:#8C8C8C">{AnnotationDependencyInjectionResolutionDemo$$EnhancerBySpringCGLIB$$9475d71@2207}</span></div>
<svg style="position:absolute;left:601px;top:1211px;" width="18" height="19" viewBox="0 0 18 19"><path d="M1 1 L16 9.5 L1 18 Z" fill="#AFB1B3"/></svg>
<svg style="position:absolute;left:637px;top:1205px;" width="30" height="30" viewBox="0 0 30 30"><circle cx="15" cy="15" r="14" fill="#A98542"/><text x="8.5" y="21" font-family="Liberation Sans" font-size="20" fill="#3C3F41">p</text></svg>
<div style="left:675px;top:1194px;width:2100px;height:52px;line-height:52px;font-size:26px;font-family:'Liberation Sans',sans-serif;white-space:pre;overflow:hidden"><span style="color:#F5877C">beanName</span><span style="color:#C8C8C8"> = </span><span style="color:#6A8759">&quot;annotationDependencyInjectionResolutionDemo&quot;</span></div>
<svg style="position:absolute;left:601px;top:1251px;" width="18" height="19" viewBox="0 0 18 19"><path d="M1 1 L16 9.5 L1 18 Z" fill="#AFB1B3"/></svg>
<svg style="position:absolute;left:637px;top:1245px;" width="30" height="30" viewBox="0 0 30 30"><circle cx="15" cy="15" r="14" fill="#A98542"/><text x="8.5" y="21" font-family="Liberation Sans" font-size="20" fill="#3C3F41">p</text></svg>
<div style="left:675px;top:1234px;width:2100px;height:52px;line-height:52px;font-size:26px;font-family:'Liberation Sans',sans-serif;white-space:pre;overflow:hidden"><span style="color:#F5877C">pvs</span><span style="color:#C8C8C8"> = </span><span style="color:#8C8C8C">{MutablePropertyValues@2216}</span><span style="color:#C8C8C8"> &quot;PropertyValues: length=0&quot;</span></div>
<svg style="position:absolute;left:601px;top:1291px;" width="18" height="19" viewBox="0 0 18 19"><path d="M1 1 L16 9.5 L1 18 Z" fill="#AFB1B3"/></svg>
<svg style="position:absolute;left:642px;top:1288px;" width="21" height="24" viewBox="0 0 21 24"><g fill="#AA8542"><rect x="0" y="0" width="20" height="6"/><rect x="0" y="8" width="20" height="6"/><rect x="0" y="16" width="20" height="6"/></g></svg>
<div style="left:675px;top:1274px;width:2076px;height:52px;line-height:52px;font-size:26px;font-family:'Liberation Sans',sans-serif;white-space:pre;overflow:hidden"><span style="color:#F5877C">field</span><span style="color:#C8C8C8"> = </span><span style="color:#8C8C8C">{Field@2278}</span><span style="color:#C8C8C8"> &quot;private org.xiaoge.thinking.in.spring.ioc.overview.domain.User org.xiaoge.thinking.in.spring.ioc.dependency.injection.AnnotationDependencyInjectionResolutionDemo.user&quot;</span></div>
<div style="left:2751px;top:1274.00px;height:52px;line-height:52px;font-size:26px;color:#C8C8C8;font-family:'Liberation Sans',sans-serif;">...</div>
<div style="left:2779px;top:1274.00px;height:52px;line-height:52px;font-size:26px;color:#5882C2;font-family:'Liberation Sans',sans-serif;">View</div>
<svg style="position:absolute;left:601px;top:1331px;" width="18" height="19" viewBox="0 0 18 19"><path d="M1 1 L16 9.5 L1 18 Z" fill="#AFB1B3"/></svg>
<svg style="position:absolute;left:642px;top:1328px;" width="21" height="24" viewBox="0 0 21 24"><g fill="#AA8542"><rect x="0" y="0" width="20" height="6"/><rect x="0" y="8" width="20" height="6"/><rect x="0" y="16" width="20" height="6"/></g></svg>
<div style="left:675px;top:1314px;width:2100px;height:52px;line-height:52px;font-size:26px;font-family:'Liberation Sans',sans-serif;white-space:pre;overflow:hidden"><span style="color:#F5877C">desc</span><span style="color:#C8C8C8"> = </span><span style="color:#8C8C8C">{DependencyDescriptor@2311}</span><span style="color:#C8C8C8"> &quot;field &#x27;user&#x27;&quot;</span></div>
<svg style="position:absolute;left:601px;top:1371px;" width="18" height="19" viewBox="0 0 18 19"><path d="M1 1 L16 9.5 L1 18 Z" fill="#AFB1B3"/></svg>
<svg style="position:absolute;left:636px;top:1372px;" width="32" height="18" viewBox="0 0 32 18"><path d="M0.5 3 C3 1 13 1 16 3 C19 1 29 1 31.5 3 V5" fill="none" stroke="#9AA7B0" stroke-width="3"/><path d="M0.5 3 V5" stroke="#9AA7B0" stroke-width="3"/><ellipse cx="8.3" cy="9.3" rx="6" ry="5.6" fill="none" stroke="#9AA7B0" stroke-width="3.2"/><ellipse cx="23.7" cy="9.3" rx="6" ry="5.6" fill="none" stroke="#9AA7B0" stroke-width="3.2"/><path d="M16 2.5 V7.5" stroke="#9AA7B0" stroke-width="2"/></svg>
<div style="left:675px;top:1354px;width:2076px;height:52px;line-height:52px;font-size:26px;font-family:'Liberation Sans',sans-serif;white-space:pre;overflow:hidden"><span style="color:#F5877C">beanFactory</span><span style="color:#C8C8C8"> = </span><span style="color:#8C8C8C">{DefaultListableBeanFactory@1607}</span><span style="color:#C8C8C8"> &quot;org.springframework.beans.factory.support.DefaultListableBeanFactory@1b7cc17c: defining beans [org.springframework.context.annotation&quot;</span></div>
<div style="left:2751px;top:1354.00px;height:52px;line-height:52px;font-size:26px;color:#C8C8C8;font-family:'Liberation Sans',sans-serif;">...</div>
<div style="left:2779px;top:1354.00px;height:52px;line-height:52px;font-size:26px;color:#5882C2;font-family:'Liberation Sans',sans-serif;">View</div>
<svg style="position:absolute;left:636px;top:1412px;" width="32" height="18" viewBox="0 0 32 18"><path d="M0.5 3 C3 1 13 1 16 3 C19 1 29 1 31.5 3 V5" fill="none" stroke="#9AA7B0" stroke-width="3"/><path d="M0.5 3 V5" stroke="#9AA7B0" stroke-width="3"/><ellipse cx="8.3" cy="9.3" rx="6" ry="5.6" fill="none" stroke="#9AA7B0" stroke-width="3.2"/><ellipse cx="23.7" cy="9.3" rx="6" ry="5.6" fill="none" stroke="#9AA7B0" stroke-width="3.2"/><path d="M16 2.5 V7.5" stroke="#9AA7B0" stroke-width="2"/></svg>
<div style="left:675px;top:1394px;width:2100px;height:52px;line-height:52px;font-size:26px;font-family:'Liberation Sans',sans-serif;white-space:pre;overflow:hidden"><span style="color:#F5877C">this.required</span><span style="color:#C8C8C8"> = </span><span style="color:#C8C8C8">true</span></div>
<div style="left:596px;top:1601px;width:687px;height:17px;background:rgba(110,112,114,0.55);"></div>
<svg style="position:absolute;left:64px;top:1633px;" width="24" height="24" viewBox="0 0 24 24"><path d="M3 1 V23 M3 18 H16 V8" fill="none" stroke="#AFB1B3" stroke-width="4"/><path d="M9 9 L16 1 L23 9 Z" fill="#AFB1B3"/></svg>
<div style="left:96.7px;top:1621.00px;height:48px;line-height:48px;font-size:24px;color:#BBBBBB;font-family:'Liberation Sans',sans-serif;transform:scaleX(0.9485);transform-origin:0 0;">9: Git</div>
<div style="left:97px;top:1656px;width:13px;height:2px;background:#BBBBBB;"></div>
<svg style="position:absolute;left:193px;top:1631px;" width="28" height="30" viewBox="0 0 28 30"><ellipse cx="11" cy="15" rx="8" ry="9.5" fill="#AFB1B3"/><rect x="1" y="10" width="20" height="3" fill="#AFB1B3"/><rect x="1" y="16" width="20" height="3" fill="#AFB1B3"/><path d="M5 2 L8 6 M17 2 L14 6" stroke="#AFB1B3" stroke-width="2.4"/><circle cx="21" cy="23" r="5" fill="#11D611" stroke="#1E2A1E" stroke-width="1"/></svg>
<div style="left:226.4px;top:1621.00px;height:48px;line-height:48px;font-size:24px;color:#FFFFFF;font-family:'Liberation Sans',sans-serif;transform:scaleX(0.9703);transform-origin:0 0;">5: Debug</div>
<div style="left:226px;top:1656px;width:13px;height:2px;background:#FFFFFF;"></div>
<svg style="position:absolute;left:367px;top:1636px;" width="22" height="17" viewBox="0 0 22 17"><g fill="#AFB1B3"><rect x="0" y="0" width="4" height="4"/><rect x="6" y="0" width="16" height="4"/><rect x="0" y="6.5" width="4" height="4"/><rect x="6" y="6.5" width="16" height="4"/><rect x="0" y="13" width="4" height="4"/><rect x="6" y="13" width="16" height="4"/></g></svg>
<div style="left:398.3px;top:1621.00px;height:48px;line-height:48px;font-size:24px;color:#BBBBBB;font-family:'Liberation Sans',sans-serif;transform:scaleX(0.9407);transform-origin:0 0;">6: TODO</div>
<div style="left:398px;top:1656px;width:13px;height:2px;background:#BBBBBB;"></div>
<svg style="position:absolute;left:530px;top:1632px;" width="26" height="23" viewBox="0 0 26 23"><path d="M1 19 C0 9 12 5 19 4 C22 3 24 1 25 0 C27 12 21 22 8 22 C5 22 2 21 1 19 Z" fill="#AFB1B3"/><path d="M2 21 C9 17 15 12 19 6" stroke="#3C3F41" stroke-width="1.6" fill="none"/></svg>
<div style="left:564.5px;top:1621.00px;height:48px;line-height:48px;font-size:24px;color:#BBBBBB;font-family:'Liberation Sans',sans-serif;transform:scaleX(0.9755);transform-origin:0 0;">Spring</div>
<svg style="position:absolute;left:677px;top:1634px;" width="23" height="20" viewBox="0 0 23 20"><rect x="0" y="0" width="23" height="20" fill="#AFB1B3"/><path d="M4 4 L10 8 L4 12" fill="none" stroke="#3C3F41" stroke-width="2"/><path d="M11 15 H18" stroke="#3C3F41" stroke-width="2"/></svg>
<div style="left:710.5px;top:1621.00px;height:48px;line-height:48px;font-size:24px;color:#BBBBBB;font-family:'Liberation Sans',sans-serif;transform:scaleX(0.9939);transform-origin:0 0;">Terminal</div>
<svg style="position:absolute;left:2681px;top:1630px;" width="28" height="28" viewBox="0 0 28 28"><circle cx="13" cy="13" r="11" fill="none" stroke="#AFB1B3" stroke-width="2.6"/></svg>
<div style="left:2717.0px;top:1621.00px;height:48px;line-height:48px;font-size:24px;color:#BBBBBB;font-family:'Liberation Sans',sans-serif;transform:scaleX(0.9444);transform-origin:0 0;">Event Log</div>
<svg style="position:absolute;left:10px;top:1672px;" width="28" height="28" viewBox="0 0 28 28"><rect x="7" y="2" width="18" height="18" fill="none" stroke="#AFB1B3" stroke-width="2.2"/><path d="M3 6 V24 H21" fill="none" stroke="#AFB1B3" stroke-width="2.2"/></svg>
<div style="left:55.0px;top:1659.00px;height:52px;line-height:52px;font-size:26px;color:#BBBBBB;font-family:'Liberation Sans',sans-serif;transform:scaleX(0.9964);transform-origin:0 0;">All files are up-to-date (18 minutes ago)</div>
<div style="left:2350px;top:1661.00px;height:48px;line-height:48px;font-size:24px;color:#BBBBBB;font-family:'Liberation Sans',sans-serif;">635:1</div>
<div style="left:2437px;top:1661.00px;height:48px;line-height:48px;font-size:24px;color:#8C8C8C;font-family:'Liberation Sans',sans-serif;">LF</div>
<div style="left:2487px;top:1661.00px;height:48px;line-height:48px;font-size:24px;color:#8C8C8C;font-family:'Liberation Sans',sans-serif;">UTF-8</div>
<div style="left:2575px;top:1653px;width:303px;height:50px;background:#FFFFFF;border:1px solid #C8CDD8;box-sizing:border-box"></div>
<svg style="position:absolute;left:2518px;top:1636px;" width="76" height="72" viewBox="0 0 76 72"><g transform="rotate(-16 38 38)"><rect x="10" y="9" width="56" height="56" rx="9" fill="#EE5F2A"/></g><path d="M52 24 C46 17 26 18 24 27 C22 36 50 33 50 42 C50 52 28 54 20 46" fill="none" stroke="#FFFFFF" stroke-width="7.5" stroke-linecap="round"/></svg>
<svg style="position:absolute;left:2598px;top:1664px;" width="34" height="36" viewBox="0 0 34 36"><rect x="3" y="9" width="28" height="16" fill="none" stroke="#1A73E8" stroke-width="4"/><path d="M17 1 V35" stroke="#1A73E8" stroke-width="4"/></svg>
<svg style="position:absolute;left:2650px;top:1668px;" width="30" height="28" viewBox="0 0 30 28"><circle cx="6" cy="6" r="4" fill="#1A73E8"/><circle cx="18" cy="14" r="4" fill="#1A73E8"/></svg>
<svg style="position:absolute;left:2698px;top:1660px;" width="30" height="40" viewBox="0 0 30 40"><rect x="9" y="1" width="12" height="24" rx="6" fill="#1A73E8"/><path d="M3 17 C3 30 27 30 27 17 M15 28 V38" fill="none" stroke="#1A73E8" stroke-width="3.4"/></svg>
<svg style="position:absolute;left:2745px;top:1668px;" width="32" height="30" viewBox="0 0 32 30"><rect x="2" y="2" width="28" height="24" fill="none" stroke="#1A73E8" stroke-width="3.4"/><path d="M2 10 H30 M2 18 H30 M10 2 V26 M16 2 V26 M22 2 V26" stroke="#1A73E8" stroke-width="2.4"/></svg>
<svg style="position:absolute;left:2790px;top:1662px;" width="34" height="38" viewBox="0 0 34 38"><path d="M1 6 L10 1 H24 L33 6 V14 H27 V37 H7 V14 H1 Z" fill="#1A73E8"/></svg>
<svg style="position:absolute;left:2836px;top:1664px;" width="36" height="36" viewBox="0 0 36 36"><rect x="2" y="2" width="14" height="14" rx="3" fill="#7B61FF"/><rect x="20" y="2" width="14" height="14" rx="3" fill="none" stroke="#7B61FF" stroke-width="3"/><rect x="2" y="20" width="14" height="14" rx="3" fill="#7B61FF"/><rect x="20" y="20" width="14" height="14" rx="3" fill="#7B61FF"/></svg>
<div style="left:2655.0px;top:1665.00px;height:44px;line-height:44px;font-size:22px;color:rgba(110,110,110,0.9);font-family:'Liberation Sans',sans-serif;transform:scaleX(0.7163);transform-origin:0 0;">CSDN @</div>
<svg style="position:absolute;left:2723px;top:1676px;" width="20" height="20" viewBox="0 0 20 20"><g transform="scale(0.625)"><path d="M8 3 H24 V15 H8 Z M12 19 L5 29 M20 19 L28 29" fill="none" stroke="rgba(110,110,110,0.9)" stroke-width="2.4" stroke-linecap="butt"/></g></svg>
<svg style="position:absolute;left:2743px;top:1676px;" width="20" height="20" viewBox="0 0 20 20"><g transform="scale(0.625)"><path d="M3 2 H29 V30 H3 Z M8 12 H24 M16 6 V15 L9 25 M16 15 L24 25" fill="none" stroke="rgba(110,110,110,0.9)" stroke-width="2.4" stroke-linecap="butt"/></g></svg>
<svg style="position:absolute;left:2763px;top:1676px;" width="20" height="20" viewBox="0 0 20 20"><g transform="scale(0.625)"><path d="M8 3 L11 7 M3 10 H27 L26 28 L22 30 M15 3 L13 18 L4 29 M17 17 L20 21" fill="none" stroke="rgba(110,110,110,0.9)" stroke-width="2.4" stroke-linecap="butt"/></g></svg>
<svg style="position:absolute;left:2783px;top:1676px;" width="20" height="20" viewBox="0 0 20 20"><g transform="scale(0.625)"><path d="M9 2 L2 15 M6 9 V31 M15 2 L12 9 M13 7 H29 L27 12 M21 12 V30 L18 28 M15 17 L12 25 M26 17 L30 25" fill="none" stroke="rgba(110,110,110,0.9)" stroke-width="2.4" stroke-linecap="butt"/></g></svg>
<svg style="position:absolute;left:2803px;top:1676px;" width="20" height="20" viewBox="0 0 20 20"><g transform="scale(0.625)"><path d="M3 3 H29 M15 3 L13 9 M5 30 V10 H27 V30 M12 10 V28 M20 10 V28" fill="none" stroke="rgba(110,110,110,0.9)" stroke-width="2.4" stroke-linecap="butt"/></g></svg>
<svg style="position:absolute;left:2823px;top:1676px;" width="20" height="20" viewBox="0 0 20 20"><g transform="scale(0.625)"><path d="M3 4 L6 7 M2 12 L5 15 M2 28 L7 19 M12 3 H26 V13 H12 Z M12 8 H26 M11 17 H27 V28 H11 Z M16 17 V28 M22 17 V28 M9 30 H30" fill="none" stroke="rgba(110,110,110,0.9)" stroke-width="2.4" stroke-linecap="butt"/></g></svg>
<svg style="position:absolute;left:2843px;top:1676px;" width="20" height="20" viewBox="0 0 20 20"><g transform="scale(0.625)"><path d="M8 3 H24 L18 8 M6 9 H27 L24 15 M16 5 V15 M3 20 H29 M16 16 V31 M15 21 L5 29 M17 21 L28 29" fill="none" stroke="rgba(110,110,110,0.9)" stroke-width="2.4" stroke-linecap="butt"/></g></svg>
</body></html>
